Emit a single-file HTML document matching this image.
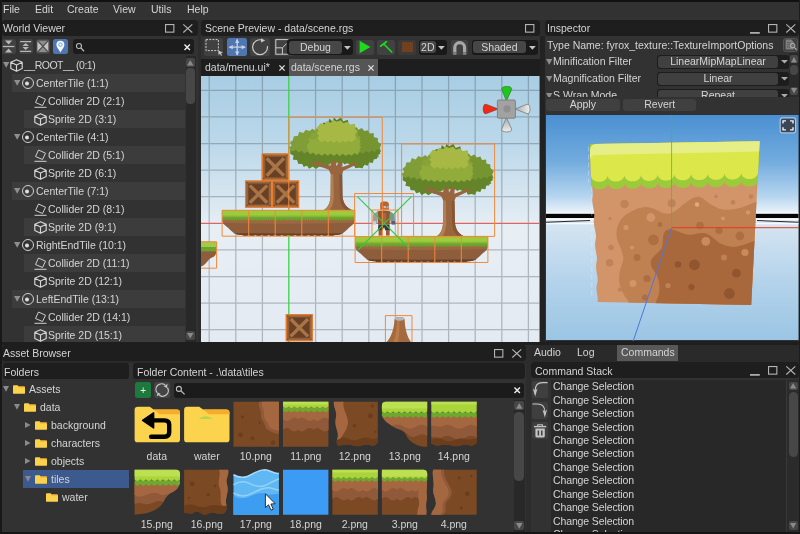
<!DOCTYPE html>
<html><head><meta charset="utf-8">
<style>
*{box-sizing:border-box;margin:0;padding:0}
html,body{width:800px;height:534px;overflow:hidden;background:#2c2c2c}
body{font-family:"Liberation Sans",sans-serif;font-size:10.5px;color:#d4d4d4;position:relative}
.a{position:absolute}
.t{position:absolute;white-space:nowrap;line-height:12px;height:12px;will-change:transform}
svg{overflow:visible}
</style></head><body>
<div class="a" style="left:2px;top:1px;width:798px;height:18.5px;background:#323232"></div>
<div class="t" style="left:3.00px;top:3px">File</div>
<div class="t" style="left:35.00px;top:3px">Edit</div>
<div class="t" style="left:67.00px;top:3px">Create</div>
<div class="t" style="left:113.00px;top:3px">View</div>
<div class="t" style="left:151.00px;top:3px">Utils</div>
<div class="t" style="left:187.00px;top:3px">Help</div>
<div class="a" style="left:2.2px;top:20px;width:195.4px;height:322.3px;background:#323232"></div>
<div class="a" style="left:2.2px;top:20px;width:195.4px;height:16.3px;background:#1e1e1e;border-radius:3px"></div>
<div class="t" style="left:3.20px;top:22px">World Viewer</div>
<svg class="a" style="left:182.6px;top:24.1px" width="9.6" height="8.8" viewBox="0 0 9.6 8.8"><path d="M0.3 0.3L9.3 8.5M9.3 0.3L0.3 8.5" stroke="#b4b4b4" stroke-width="1.1" fill="none"/></svg>
<svg class="a" style="left:164.7px;top:24.1px" width="9.4" height="8.7" viewBox="0 0 9.4 8.7"><rect x="0.55" y="0.55" width="8.3" height="7.6" stroke="#b4b4b4" stroke-width="1.1" fill="none"/></svg>
<div class="a" style="left:2.4px;top:39px;width:13.2px;height:14.8px;background:#424242;border-radius:2.5px"></div>
<svg class="a" style="left:2.4px;top:39px" width="13.2" height="14.8" viewBox="0 0 13.2 14.8"><path d="M3 1.5H10.2L6.6 5.6ZM3 13.5H10.2L6.6 9.4Z" fill="#b8b8b8"/><path d="M0.8 7.5H12.4" stroke="#b8b8b8" stroke-width="1.3"/></svg>
<div class="a" style="left:19.2px;top:39px;width:13.4px;height:14.8px;background:#424242;border-radius:2.5px"></div>
<svg class="a" style="left:19.2px;top:39px" width="13.4" height="14.8" viewBox="0 0 13.4 14.8"><path d="M1.2 2.6H12.2M1.2 12.4H12.2" stroke="#b8b8b8" stroke-width="1.3"/><path d="M6.7 3.9L10 7.1H3.4ZM6.7 11.1L10 7.9H3.4Z" fill="#b8b8b8"/></svg>
<div class="a" style="left:36px;top:39px;width:13.8px;height:14.8px;background:#424242;border-radius:2.5px"></div>
<svg class="a" style="left:36px;top:39px" width="13.8" height="14.8" viewBox="0 0 13.8 14.8"><rect x="1.5" y="1.6" width="10.8" height="11.6" fill="#8c8c8c"/><path d="M1.5 1.6L6.9 7.4L1.5 13.2ZM12.3 1.6L6.9 7.4L12.3 13.2Z" fill="#c2c2c2"/><path d="M1.5 1.6L12.3 13.2M12.3 1.6L1.5 13.2" stroke="#4a4a4a" stroke-width="1.2"/></svg>
<div class="a" style="left:53.4px;top:38.6px;width:14.8px;height:15.4px;background:#5076b2;border-radius:2.5px"></div>
<svg class="a" style="left:53.4px;top:38.6px" width="14.8" height="15.4" viewBox="0 0 14.8 15.4"><path d="M7.4 13.4C5 9.6 3.4 8 3.4 5.8A4 4 0 0 1 11.4 5.8C11.4 8 9.8 9.6 7.4 13.4Z" fill="#f4f6fa"/><circle cx="7.4" cy="5.6" r="1.7" fill="none" stroke="#5aa0d8" stroke-width="0.9"/></svg>
<div class="a" style="left:73.2px;top:39.4px;width:120.4px;height:14.4px;background:#1c1c1c;border-radius:3px"></div>
<svg class="a" style="left:75.8px;top:42.6px" width="9" height="9" viewBox="0 0 9 9"><circle cx="3" cy="3" r="2.5" fill="none" stroke="#bdbdbd" stroke-width="1.1"/><path d="M4.9 4.9L8 8.2" stroke="#bdbdbd" stroke-width="1.3"/></svg>
<svg class="a" style="left:184.4px;top:43.6px" width="6.4" height="6.4" viewBox="0 0 6.4 6.4"><path d="M0.5 0.5L5.9 5.9M5.9 0.5L0.5 5.9" stroke="#f0f0f0" stroke-width="1.4" fill="none"/></svg>
<svg class="a" style="left:2.55px;top:62.4px" width="6.4" height="6" viewBox="0 0 6.4 6"><path d="M0 0H6.4L3.2 5.8Z" fill="#8e8e8e"/></svg>
<svg class="a" style="left:10px;top:58.6px" width="13" height="13" viewBox="0 0 13 13"><path d="M6.5 0.7L12.2 3.3V9.6L6.5 12.3L0.8 9.6V3.3ZM0.8 3.3L6.5 6L12.2 3.3M6.5 6V12.3" stroke="#d6d6d6" stroke-width="1.15" fill="none" stroke-linejoin="round"/></svg>
<div class="t" style="left:24.30px;top:59px;letter-spacing:-0.5px">__ROOT__ (0:1)</div>
<div class="a" style="left:12px;top:74.3px;width:172.5px;height:17.6px;background:#3c3c3c"></div>
<svg class="a" style="left:14.3px;top:80.4px" width="6.4" height="6" viewBox="0 0 6.4 6"><path d="M0 0H6.4L3.2 5.8Z" fill="#8e8e8e"/></svg>
<svg class="a" style="left:22px;top:77.4px" width="12" height="12" viewBox="0 0 12 12"><circle cx="6" cy="6" r="5.5" stroke="#d0d0d0" fill="none"/><circle cx="5" cy="6.6" r="2" fill="#e0e0e0"/></svg>
<div class="t" style="left:36.20px;top:77px">CenterTile (1:1)</div>
<svg class="a" style="left:34px;top:94.6px" width="13" height="13" viewBox="0 0 13 13"><path d="M4.5 1L11.5 4.2L8.5 10.5L1.5 7.5ZM0.5 12.3H12.5" stroke="#d0d0d0" stroke-width="1" fill="none" stroke-linejoin="round"/></svg>
<div class="t" style="left:48.00px;top:95px">Collider 2D (2:1)</div>
<div class="a" style="left:24px;top:110.3px;width:160.5px;height:17.6px;background:#3c3c3c"></div>
<svg class="a" style="left:34px;top:112.6px" width="13" height="13" viewBox="0 0 13 13"><path d="M6.5 0.7L12.2 3.3V9.6L6.5 12.3L0.8 9.6V3.3ZM0.8 3.3L6.5 6L12.2 3.3M6.5 6V12.3" stroke="#d6d6d6" stroke-width="1.15" fill="none" stroke-linejoin="round"/></svg>
<div class="t" style="left:48.00px;top:113px">Sprite 2D (3:1)</div>
<svg class="a" style="left:14.3px;top:134.4px" width="6.4" height="6" viewBox="0 0 6.4 6"><path d="M0 0H6.4L3.2 5.8Z" fill="#8e8e8e"/></svg>
<svg class="a" style="left:22px;top:131.4px" width="12" height="12" viewBox="0 0 12 12"><circle cx="6" cy="6" r="5.5" stroke="#d0d0d0" fill="none"/><circle cx="5" cy="6.6" r="2" fill="#e0e0e0"/></svg>
<div class="t" style="left:36.20px;top:131px">CenterTile (4:1)</div>
<div class="a" style="left:24px;top:146.3px;width:160.5px;height:17.6px;background:#3c3c3c"></div>
<svg class="a" style="left:34px;top:148.6px" width="13" height="13" viewBox="0 0 13 13"><path d="M4.5 1L11.5 4.2L8.5 10.5L1.5 7.5ZM0.5 12.3H12.5" stroke="#d0d0d0" stroke-width="1" fill="none" stroke-linejoin="round"/></svg>
<div class="t" style="left:48.00px;top:149px">Collider 2D (5:1)</div>
<svg class="a" style="left:34px;top:166.6px" width="13" height="13" viewBox="0 0 13 13"><path d="M6.5 0.7L12.2 3.3V9.6L6.5 12.3L0.8 9.6V3.3ZM0.8 3.3L6.5 6L12.2 3.3M6.5 6V12.3" stroke="#d6d6d6" stroke-width="1.15" fill="none" stroke-linejoin="round"/></svg>
<div class="t" style="left:48.00px;top:167px">Sprite 2D (6:1)</div>
<div class="a" style="left:12px;top:182.3px;width:172.5px;height:17.6px;background:#3c3c3c"></div>
<svg class="a" style="left:14.3px;top:188.4px" width="6.4" height="6" viewBox="0 0 6.4 6"><path d="M0 0H6.4L3.2 5.8Z" fill="#8e8e8e"/></svg>
<svg class="a" style="left:22px;top:185.4px" width="12" height="12" viewBox="0 0 12 12"><circle cx="6" cy="6" r="5.5" stroke="#d0d0d0" fill="none"/><circle cx="5" cy="6.6" r="2" fill="#e0e0e0"/></svg>
<div class="t" style="left:36.20px;top:185px">CenterTile (7:1)</div>
<svg class="a" style="left:34px;top:202.6px" width="13" height="13" viewBox="0 0 13 13"><path d="M4.5 1L11.5 4.2L8.5 10.5L1.5 7.5ZM0.5 12.3H12.5" stroke="#d0d0d0" stroke-width="1" fill="none" stroke-linejoin="round"/></svg>
<div class="t" style="left:48.00px;top:203px">Collider 2D (8:1)</div>
<div class="a" style="left:24px;top:218.3px;width:160.5px;height:17.6px;background:#3c3c3c"></div>
<svg class="a" style="left:34px;top:220.6px" width="13" height="13" viewBox="0 0 13 13"><path d="M6.5 0.7L12.2 3.3V9.6L6.5 12.3L0.8 9.6V3.3ZM0.8 3.3L6.5 6L12.2 3.3M6.5 6V12.3" stroke="#d6d6d6" stroke-width="1.15" fill="none" stroke-linejoin="round"/></svg>
<div class="t" style="left:48.00px;top:221px">Sprite 2D (9:1)</div>
<svg class="a" style="left:14.3px;top:242.4px" width="6.4" height="6" viewBox="0 0 6.4 6"><path d="M0 0H6.4L3.2 5.8Z" fill="#8e8e8e"/></svg>
<svg class="a" style="left:22px;top:239.4px" width="12" height="12" viewBox="0 0 12 12"><circle cx="6" cy="6" r="5.5" stroke="#d0d0d0" fill="none"/><circle cx="5" cy="6.6" r="2" fill="#e0e0e0"/></svg>
<div class="t" style="left:36.20px;top:239px">RightEndTile (10:1)</div>
<div class="a" style="left:24px;top:254.3px;width:160.5px;height:17.6px;background:#3c3c3c"></div>
<svg class="a" style="left:34px;top:256.6px" width="13" height="13" viewBox="0 0 13 13"><path d="M4.5 1L11.5 4.2L8.5 10.5L1.5 7.5ZM0.5 12.3H12.5" stroke="#d0d0d0" stroke-width="1" fill="none" stroke-linejoin="round"/></svg>
<div class="t" style="left:48.00px;top:257px">Collider 2D (11:1)</div>
<svg class="a" style="left:34px;top:274.6px" width="13" height="13" viewBox="0 0 13 13"><path d="M6.5 0.7L12.2 3.3V9.6L6.5 12.3L0.8 9.6V3.3ZM0.8 3.3L6.5 6L12.2 3.3M6.5 6V12.3" stroke="#d6d6d6" stroke-width="1.15" fill="none" stroke-linejoin="round"/></svg>
<div class="t" style="left:48.00px;top:275px">Sprite 2D (12:1)</div>
<div class="a" style="left:12px;top:290.3px;width:172.5px;height:17.6px;background:#3c3c3c"></div>
<svg class="a" style="left:14.3px;top:296.4px" width="6.4" height="6" viewBox="0 0 6.4 6"><path d="M0 0H6.4L3.2 5.8Z" fill="#8e8e8e"/></svg>
<svg class="a" style="left:22px;top:293.4px" width="12" height="12" viewBox="0 0 12 12"><circle cx="6" cy="6" r="5.5" stroke="#d0d0d0" fill="none"/><circle cx="5" cy="6.6" r="2" fill="#e0e0e0"/></svg>
<div class="t" style="left:36.20px;top:293px">LeftEndTile (13:1)</div>
<svg class="a" style="left:34px;top:310.6px" width="13" height="13" viewBox="0 0 13 13"><path d="M4.5 1L11.5 4.2L8.5 10.5L1.5 7.5ZM0.5 12.3H12.5" stroke="#d0d0d0" stroke-width="1" fill="none" stroke-linejoin="round"/></svg>
<div class="t" style="left:48.00px;top:311px">Collider 2D (14:1)</div>
<div class="a" style="left:24px;top:326.3px;width:160.5px;height:17.6px;background:#3c3c3c"></div>
<svg class="a" style="left:34px;top:328.6px" width="13" height="13" viewBox="0 0 13 13"><path d="M6.5 0.7L12.2 3.3V9.6L6.5 12.3L0.8 9.6V3.3ZM0.8 3.3L6.5 6L12.2 3.3M6.5 6V12.3" stroke="#d6d6d6" stroke-width="1.15" fill="none" stroke-linejoin="round"/></svg>
<div class="t" style="left:48.00px;top:329px">Sprite 2D (15:1)</div>
<div class="a" style="left:0px;top:342.3px;width:800px;height:3px;background:#1e1e1e"></div>
<div class="a" style="left:185.8px;top:56px;width:10.2px;height:286.3px;background:#282828"></div>
<div class="a" style="left:186.3px;top:58px;width:8.7px;height:8.7px;background:#474747;border-radius:2px"></div>
<svg class="a" style="left:187.4px;top:59.5px" width="6.5" height="6" viewBox="0 0 6.5 6"><path d="M3.25 0L6.5 5.5H0Z" fill="#8a8a8a"/></svg>
<div class="a" style="left:186.3px;top:68px;width:8.7px;height:36px;background:#474747;border-radius:4px"></div>
<div class="a" style="left:186.3px;top:331px;width:8.7px;height:9px;background:#474747;border-radius:2px"></div>
<svg class="a" style="left:187.4px;top:333px" width="6.5" height="6" viewBox="0 0 6.5 6"><path d="M0 0H6.5L3.25 5.5Z" fill="#8a8a8a"/></svg>
<div class="a" style="left:200.8px;top:20px;width:338.8px;height:322.3px;background:#323232"></div>
<div class="a" style="left:200.8px;top:20px;width:338.8px;height:16.3px;background:#1e1e1e;border-radius:3px"></div>
<div class="t" style="left:205.30px;top:22px">Scene Preview - data/scene.rgs</div>
<svg class="a" style="left:525.4000000000001px;top:24.1px" width="9.4" height="8.7" viewBox="0 0 9.4 8.7"><rect x="0.55" y="0.55" width="8.3" height="7.6" stroke="#b4b4b4" stroke-width="1.1" fill="none"/></svg>
<svg class="a" style="left:201px;top:76px;overflow:hidden" width="338.5" height="266" viewBox="201 76 338.5 266"><defs><linearGradient id="sky" x1="0" y1="0" x2="0" y2="1"><stop offset="0" stop-color="#a8cde3"/><stop offset="0.25" stop-color="#bbd8ea"/><stop offset="0.5" stop-color="#dde9f2"/><stop offset="0.56" stop-color="#e7eef4"/><stop offset="1" stop-color="#e3eaf2"/></linearGradient><g id="gt"><rect x="0" y="8" width="26.7" height="17" fill="#9a6943"/><rect x="0" y="0" width="26.7" height="10" fill="#72a733"/><rect x="0" y="0" width="26.7" height="5" fill="#a3cd49"/></g></defs><rect x="201" y="76" width="338.5" height="266" fill="url(#sky)"/><path d="M209.2 76V342M235.8 76V342M262.4 76V342M315.6 76V342M342.2 76V342M368.8 76V342M395.4 76V342M422.0 76V342M448.6 76V342M475.2 76V342M501.8 76V342M528.4 76V342M201 90.3H539.5M201 116.9H539.5M201 143.5H539.5M201 170.1H539.5M201 196.7H539.5M201 249.9H539.5M201 276.5H539.5M201 303.1H539.5M201 329.7H539.5" stroke="#485058" stroke-opacity="0.34" stroke-width="1.25" fill="none"/><path d="M201 223.4H539.5" stroke="#e06464" stroke-width="1.4"/><path d="M288.8 76V342" stroke="#3fd14a" stroke-width="1.3"/><g transform="translate(288.8 117.3)"><path d="M-0.3 30.6 L2.8 28.3 L1.3 24.8 L4.1 22.9 L5.0 18.9 L9.0 18.6 L10.5 14.4 L14.4 15.7 L17.0 12.4 L20.7 13.8 L23.8 11.4 L26.9 13.9 L31.5 12.7 L29.9 16.6 L33.1 19.5 L31.5 23.4 L34.7 26.3 L33.1 29.9 L35.3 33.5 L32.7 36.7 L34.9 40.3 L32.3 43.5 L34.2 48.0 L30.5 49.1 L27.2 51.5 L24.0 49.1 L20.2 51.4 L18.4 48.2 L14.9 49.5 L13.4 46.5 L9.4 46.5 L8.5 42.7 L4.1 42.1 L5.3 38.5 L2.0 36.8 L3.1 33.3Z" fill="#809d38"/><path d="M61.6 11.1 L64.7 12.6 L67.2 9.5 L69.7 12.5 L73.1 10.8 L75.4 13.7 L79.1 12.9 L80.7 16.3 L84.8 15.8 L85.1 19.9 L89.0 20.8 L89.1 24.4 L92.4 27.3 L91.0 30.8 L92.3 34.2 L89.1 36.0 L90.0 40.0 L85.5 40.9 L83.9 45.6 L80.3 44.8 L79.0 48.2 L75.4 47.4 L73.5 51.0 L70.3 50.2 L66.6 50.9 L65.1 47.4 L60.5 47.1 L62.1 43.2 L58.9 40.4 L60.5 36.5 L57.3 33.7 L58.9 30.2 L57.2 26.7 L60.2 24.4 L58.5 20.9 L61.5 18.5 L59.9 15.1Z" fill="#76942f"/><path d="M34.7 5.2 L39.3 6.3 L40.5 1.3 L43.7 4.1 L45.3 0.1 L47.9 2.9 L52.0 0.1 L54.4 4.2 L59.0 2.5 L59.7 6.4 L61.8 11.2 L59.3 7.5 L56.3 10.8 L53.8 7.1 L50.8 10.4 L48.1 6.7 L45.7 10.4 L42.8 7.1 L40.4 10.8 L37.5 7.5 L33.0 8.0Z" fill="#5f7b26"/><path d="M17.7 27.7 L20.7 25.2 L18.9 21.7 L21.6 19.7 L22.2 15.9 L26.0 15.7 L26.2 12.6 L29.3 9.4 L31.7 6.1 L35.5 7.4 L38.1 4.0 L41.8 5.8 L44.6 2.8 L48.0 4.5 L51.9 2.9 L54.6 6.1 L58.4 4.5 L61.4 7.6 L66.3 6.8 L66.2 11.3 L69.6 13.5 L68.5 17.3 L72.0 19.9 L69.8 23.4 L72.3 26.6 L70.1 29.8 L71.8 33.6 L68.8 36.5 L70.3 40.7 L66.7 42.6 L65.9 47.5 L62.9 44.9 L59.6 47.0 L56.6 44.4 L53.2 46.5 L50.1 43.9 L47.2 46.8 L43.6 45.0 L40.7 47.9 L37.1 46.1 L34.9 48.7 L31.1 49.3 L27.3 49.1 L26.8 45.3 L22.7 44.7 L23.5 40.9 L20.0 39.3 L20.9 35.9 L18.2 33.5 L20.4 30.6Z" fill="#88a338"/><path d="M18.0 27.7 L20.6 25.2 L20.6 20.8 L23.5 22.9 L26.7 21.2 L29.6 23.4 L32.8 21.7 L35.7 23.8 L38.9 22.1 L41.8 24.3 L45.0 22.6 L48.1 24.7 L50.7 22.4 L53.7 24.0 L56.3 21.7 L59.4 23.2 L62.0 20.9 L65.0 22.5 L67.6 20.2 L69.9 21.0 L71.9 23.9 L70.1 27.0 L72.2 30.3 L69.5 33.3 L69.6 38.2 L66.4 36.5 L63.4 38.7 L60.2 37.0 L57.3 39.1 L54.1 37.4 L51.2 39.6 L48.0 37.9 L45.0 39.6 L42.3 37.5 L39.3 39.3 L36.5 37.2 L33.5 38.9 L30.7 36.8 L27.7 38.6 L24.9 36.5 L21.0 37.7 L20.7 33.9 L18.4 31.2Z" fill="#92ac3b"/><path d="M27.9 16.0 L29.9 13.5 L27.8 11.0 L29.2 9.2 L31.7 6.3 L35.5 7.2 L38.2 4.2 L41.8 5.6 L44.7 3.0 L48.0 4.4 L51.8 3.1 L54.6 6.0 L58.4 4.7 L61.4 7.5 L66.1 6.9 L66.2 11.0 L68.3 14.5 L66.2 17.8 L67.5 21.1 L65.5 22.7 L62.7 25.0 L59.6 23.1 L56.8 25.3 L53.8 23.5 L51.0 25.7 L48.0 23.8 L44.9 25.7 L42.0 23.5 L38.9 25.3 L36.0 23.1 L32.9 25.0 L30.8 23.4 L28.4 21.1 L30.2 18.4Z" fill="#a7b944"/><path d="M1.4 31.6 L4.0 34.3 L7.2 32.5 L9.7 35.2 L12.9 33.4 L15.5 36.1 L18.7 34.3 L21.2 37.0 L24.5 35.2 L27.0 37.9 L30.0 36.1 L33.0 38.4 L36.0 36.2 L39.0 38.5 L42.0 36.3 L45.0 38.6 L48.0 36.4 L51.0 38.7 L54.0 36.5 L57.0 38.8 L59.8 36.6 L63.0 38.4 L65.5 35.7 L68.7 37.5 L71.2 34.8 L74.4 36.6 L77.0 33.9 L80.2 35.6 L82.7 33.0 L85.9 34.7 L88.4 32.1 L90.7 32.7 L91.5 36.5 L88.4 38.3 L88.0 41.7 L84.6 41.9 L83.9 45.5 L80.3 44.9 L78.9 48.1 L75.4 47.4 L73.5 50.9 L70.3 50.3 L66.6 50.8 L65.0 47.5 L61.8 48.2 L59.2 45.5 L55.9 47.2 L53.3 44.5 L50.4 46.2 L47.1 44.5 L44.5 47.2 L41.2 45.5 L38.9 48.1 L35.5 47.1 L33.7 50.2 L30.5 49.2 L27.2 51.4 L24.0 49.2 L20.2 51.3 L18.3 48.3 L15.0 49.5 L13.3 46.5 L9.5 46.4 L8.5 42.7 L4.3 42.1 L4.8 38.3 L1.4 36.5Z" fill="#64842a"/><path d="M33.5 93.4 C39 91.5 41.5 86 41.8 78 L42 57 L40 52.5 L23 46 L24 43.5 L41.5 48.5 L44 43 L47 43 L47.5 49 L51 43 L53.5 44 L53 50 L68.5 44.5 L69.5 46.5 L54.5 53.5 L53.2 57 L53.6 78 C54 86 58 91.5 65 93.4 Z" fill="#99653f"/><path d="M44.5 57 L45 78 C45 86 43 91 40 93.4 L33.5 93.4 C39 91.5 41.5 86 41.8 78 L42 57Z" fill="#b37e51"/><path d="M50.5 57 L50.8 78 C51 86 54 91 58 93.4 L65 93.4 C58 91.5 54 86 53.6 78 L53.2 57Z" fill="#875636"/></g><g transform="translate(401.3 143.7)"><path d="M-0.3 30.6 L2.8 28.3 L1.3 24.8 L4.1 22.9 L5.0 18.9 L9.0 18.6 L10.5 14.4 L14.4 15.7 L17.0 12.4 L20.7 13.8 L23.8 11.4 L26.9 13.9 L31.5 12.7 L29.9 16.6 L33.1 19.5 L31.5 23.4 L34.7 26.3 L33.1 29.9 L35.3 33.5 L32.7 36.7 L34.9 40.3 L32.3 43.5 L34.2 48.0 L30.5 49.1 L27.2 51.5 L24.0 49.1 L20.2 51.4 L18.4 48.2 L14.9 49.5 L13.4 46.5 L9.4 46.5 L8.5 42.7 L4.1 42.1 L5.3 38.5 L2.0 36.8 L3.1 33.3Z" fill="#809d38"/><path d="M61.6 11.1 L64.7 12.6 L67.2 9.5 L69.7 12.5 L73.1 10.8 L75.4 13.7 L79.1 12.9 L80.7 16.3 L84.8 15.8 L85.1 19.9 L89.0 20.8 L89.1 24.4 L92.4 27.3 L91.0 30.8 L92.3 34.2 L89.1 36.0 L90.0 40.0 L85.5 40.9 L83.9 45.6 L80.3 44.8 L79.0 48.2 L75.4 47.4 L73.5 51.0 L70.3 50.2 L66.6 50.9 L65.1 47.4 L60.5 47.1 L62.1 43.2 L58.9 40.4 L60.5 36.5 L57.3 33.7 L58.9 30.2 L57.2 26.7 L60.2 24.4 L58.5 20.9 L61.5 18.5 L59.9 15.1Z" fill="#76942f"/><path d="M34.7 5.2 L39.3 6.3 L40.5 1.3 L43.7 4.1 L45.3 0.1 L47.9 2.9 L52.0 0.1 L54.4 4.2 L59.0 2.5 L59.7 6.4 L61.8 11.2 L59.3 7.5 L56.3 10.8 L53.8 7.1 L50.8 10.4 L48.1 6.7 L45.7 10.4 L42.8 7.1 L40.4 10.8 L37.5 7.5 L33.0 8.0Z" fill="#5f7b26"/><path d="M17.7 27.7 L20.7 25.2 L18.9 21.7 L21.6 19.7 L22.2 15.9 L26.0 15.7 L26.2 12.6 L29.3 9.4 L31.7 6.1 L35.5 7.4 L38.1 4.0 L41.8 5.8 L44.6 2.8 L48.0 4.5 L51.9 2.9 L54.6 6.1 L58.4 4.5 L61.4 7.6 L66.3 6.8 L66.2 11.3 L69.6 13.5 L68.5 17.3 L72.0 19.9 L69.8 23.4 L72.3 26.6 L70.1 29.8 L71.8 33.6 L68.8 36.5 L70.3 40.7 L66.7 42.6 L65.9 47.5 L62.9 44.9 L59.6 47.0 L56.6 44.4 L53.2 46.5 L50.1 43.9 L47.2 46.8 L43.6 45.0 L40.7 47.9 L37.1 46.1 L34.9 48.7 L31.1 49.3 L27.3 49.1 L26.8 45.3 L22.7 44.7 L23.5 40.9 L20.0 39.3 L20.9 35.9 L18.2 33.5 L20.4 30.6Z" fill="#88a338"/><path d="M18.0 27.7 L20.6 25.2 L20.6 20.8 L23.5 22.9 L26.7 21.2 L29.6 23.4 L32.8 21.7 L35.7 23.8 L38.9 22.1 L41.8 24.3 L45.0 22.6 L48.1 24.7 L50.7 22.4 L53.7 24.0 L56.3 21.7 L59.4 23.2 L62.0 20.9 L65.0 22.5 L67.6 20.2 L69.9 21.0 L71.9 23.9 L70.1 27.0 L72.2 30.3 L69.5 33.3 L69.6 38.2 L66.4 36.5 L63.4 38.7 L60.2 37.0 L57.3 39.1 L54.1 37.4 L51.2 39.6 L48.0 37.9 L45.0 39.6 L42.3 37.5 L39.3 39.3 L36.5 37.2 L33.5 38.9 L30.7 36.8 L27.7 38.6 L24.9 36.5 L21.0 37.7 L20.7 33.9 L18.4 31.2Z" fill="#92ac3b"/><path d="M27.9 16.0 L29.9 13.5 L27.8 11.0 L29.2 9.2 L31.7 6.3 L35.5 7.2 L38.2 4.2 L41.8 5.6 L44.7 3.0 L48.0 4.4 L51.8 3.1 L54.6 6.0 L58.4 4.7 L61.4 7.5 L66.1 6.9 L66.2 11.0 L68.3 14.5 L66.2 17.8 L67.5 21.1 L65.5 22.7 L62.7 25.0 L59.6 23.1 L56.8 25.3 L53.8 23.5 L51.0 25.7 L48.0 23.8 L44.9 25.7 L42.0 23.5 L38.9 25.3 L36.0 23.1 L32.9 25.0 L30.8 23.4 L28.4 21.1 L30.2 18.4Z" fill="#a7b944"/><path d="M1.4 31.6 L4.0 34.3 L7.2 32.5 L9.7 35.2 L12.9 33.4 L15.5 36.1 L18.7 34.3 L21.2 37.0 L24.5 35.2 L27.0 37.9 L30.0 36.1 L33.0 38.4 L36.0 36.2 L39.0 38.5 L42.0 36.3 L45.0 38.6 L48.0 36.4 L51.0 38.7 L54.0 36.5 L57.0 38.8 L59.8 36.6 L63.0 38.4 L65.5 35.7 L68.7 37.5 L71.2 34.8 L74.4 36.6 L77.0 33.9 L80.2 35.6 L82.7 33.0 L85.9 34.7 L88.4 32.1 L90.7 32.7 L91.5 36.5 L88.4 38.3 L88.0 41.7 L84.6 41.9 L83.9 45.5 L80.3 44.9 L78.9 48.1 L75.4 47.4 L73.5 50.9 L70.3 50.3 L66.6 50.8 L65.0 47.5 L61.8 48.2 L59.2 45.5 L55.9 47.2 L53.3 44.5 L50.4 46.2 L47.1 44.5 L44.5 47.2 L41.2 45.5 L38.9 48.1 L35.5 47.1 L33.7 50.2 L30.5 49.2 L27.2 51.4 L24.0 49.2 L20.2 51.3 L18.3 48.3 L15.0 49.5 L13.3 46.5 L9.5 46.4 L8.5 42.7 L4.3 42.1 L4.8 38.3 L1.4 36.5Z" fill="#64842a"/><path d="M33.5 93.4 C39 91.5 41.5 86 41.8 78 L42 57 L40 52.5 L23 46 L24 43.5 L41.5 48.5 L44 43 L47 43 L47.5 49 L51 43 L53.5 44 L53 50 L68.5 44.5 L69.5 46.5 L54.5 53.5 L53.2 57 L53.6 78 C54 86 58 91.5 65 93.4 Z" fill="#99653f"/><path d="M44.5 57 L45 78 C45 86 43 91 40 93.4 L33.5 93.4 C39 91.5 41.5 86 41.8 78 L42 57Z" fill="#b37e51"/><path d="M50.5 57 L50.8 78 C51 86 54 91 58 93.4 L65 93.4 C58 91.5 54 86 53.6 78 L53.2 57Z" fill="#875636"/></g><g transform="translate(261.8 153.5)"><rect x="0" y="0" width="27" height="27" fill="#9a663b"/><rect x="3.3" y="3.3" width="20.4" height="20.4" fill="#684025"/><path d="M3.6 6L6 3.6L23.4 21L21 23.4ZM21 3.6L23.4 6L6 23.4L3.6 21Z" fill="#a97547"/><rect x="3.3" y="3.3" width="20.4" height="20.4" fill="none" stroke="#7a4c2b" stroke-width="0.8"/><circle cx="2" cy="2" r="0.6" fill="#5a3a20"/><circle cx="25" cy="2" r="0.6" fill="#5a3a20"/><circle cx="2" cy="25" r="0.6" fill="#5a3a20"/><circle cx="25" cy="25" r="0.6" fill="#5a3a20"/><rect x="0.5" y="0.5" width="26" height="26" fill="none" stroke="#ef7d2c" stroke-width="1.1"/></g><g transform="translate(245 180.6)"><rect x="0" y="0" width="27" height="27" fill="#9a663b"/><rect x="3.3" y="3.3" width="20.4" height="20.4" fill="#684025"/><path d="M3.6 6L6 3.6L23.4 21L21 23.4ZM21 3.6L23.4 6L6 23.4L3.6 21Z" fill="#a97547"/><rect x="3.3" y="3.3" width="20.4" height="20.4" fill="none" stroke="#7a4c2b" stroke-width="0.8"/><circle cx="2" cy="2" r="0.6" fill="#5a3a20"/><circle cx="25" cy="2" r="0.6" fill="#5a3a20"/><circle cx="2" cy="25" r="0.6" fill="#5a3a20"/><circle cx="25" cy="25" r="0.6" fill="#5a3a20"/><rect x="0.5" y="0.5" width="26" height="26" fill="none" stroke="#ef7d2c" stroke-width="1.1"/></g><g transform="translate(272.1 180.6)"><rect x="0" y="0" width="27" height="27" fill="#9a663b"/><rect x="3.3" y="3.3" width="20.4" height="20.4" fill="#684025"/><path d="M3.6 6L6 3.6L23.4 21L21 23.4ZM21 3.6L23.4 6L6 23.4L3.6 21Z" fill="#a97547"/><rect x="3.3" y="3.3" width="20.4" height="20.4" fill="none" stroke="#7a4c2b" stroke-width="0.8"/><circle cx="2" cy="2" r="0.6" fill="#5a3a20"/><circle cx="25" cy="2" r="0.6" fill="#5a3a20"/><circle cx="2" cy="25" r="0.6" fill="#5a3a20"/><circle cx="25" cy="25" r="0.6" fill="#5a3a20"/><rect x="0.5" y="0.5" width="26" height="26" fill="none" stroke="#ef7d2c" stroke-width="1.1"/></g><g transform="translate(285.8 314.2)"><rect x="0" y="0" width="27" height="27" fill="#9a663b"/><rect x="3.3" y="3.3" width="20.4" height="20.4" fill="#684025"/><path d="M3.6 6L6 3.6L23.4 21L21 23.4ZM21 3.6L23.4 6L6 23.4L3.6 21Z" fill="#a97547"/><rect x="3.3" y="3.3" width="20.4" height="20.4" fill="none" stroke="#7a4c2b" stroke-width="0.8"/><circle cx="2" cy="2" r="0.6" fill="#5a3a20"/><circle cx="25" cy="2" r="0.6" fill="#5a3a20"/><circle cx="2" cy="25" r="0.6" fill="#5a3a20"/><circle cx="25" cy="25" r="0.6" fill="#5a3a20"/><rect x="0.5" y="0.5" width="26" height="26" fill="none" stroke="#ef7d2c" stroke-width="1.1"/></g><path d="M222.1 218.3 H354.9 C355.4 223.3 351.9 225.3 348.9 227.8 C344.9 232.3 340.9 235.5 334.9 234.9 Q331.5 237.1 328.2 234.9 Q324.9 237.1 321.6 234.9 Q318.3 237.1 315.0 234.9 Q311.7 237.1 308.4 234.9 Q305.0 237.1 301.7 234.9 Q298.4 237.1 295.1 234.9 Q291.8 237.1 288.5 234.9 Q285.2 237.1 281.9 234.9 Q278.5 237.1 275.2 234.9 Q271.9 237.1 268.6 234.9 Q265.3 237.1 262.0 234.9 Q258.7 237.1 255.4 234.9 Q252.0 237.1 248.7 234.9 Q245.4 237.1 242.1 234.9 C236.1 235.5 232.1 232.3 228.1 227.8 C225.1 225.3 221.6 223.3 222.1 218.3Z" fill="#8e5d3b"/><clipPath id="cp222"><path d="M222.1 218.3 H354.9 C355.4 223.3 351.9 225.3 348.9 227.8 C344.9 232.3 340.9 235.5 334.9 234.9 Q331.5 237.1 328.2 234.9 Q324.9 237.1 321.6 234.9 Q318.3 237.1 315.0 234.9 Q311.7 237.1 308.4 234.9 Q305.0 237.1 301.7 234.9 Q298.4 237.1 295.1 234.9 Q291.8 237.1 288.5 234.9 Q285.2 237.1 281.9 234.9 Q278.5 237.1 275.2 234.9 Q271.9 237.1 268.6 234.9 Q265.3 237.1 262.0 234.9 Q258.7 237.1 255.4 234.9 Q252.0 237.1 248.7 234.9 Q245.4 237.1 242.1 234.9 C236.1 235.5 232.1 232.3 228.1 227.8 C225.1 225.3 221.6 223.3 222.1 218.3Z"/></clipPath><path d="M222.1 232.9 Q288.5 233.9 354.9 232.9 V238.5 H222.1Z" fill="#6c4227" clip-path="url(#cp222)"/><path d="M222.1 218.3 H354.9 V222.8 Q288.5 224.8 222.1 222.8Z" fill="#a06a44" clip-path="url(#cp222)" opacity="0.8"/><path d="M222.1 210.3 H354.9 V219.1 L353.7 220.9 L352.6 219.1 L351.5 220.9 L350.4 219.1 L349.3 220.9 L348.2 219.1 L347.1 220.9 L346.0 219.1 L344.9 220.9 L343.8 219.1 L342.7 220.9 L341.6 219.1 L340.5 220.9 L339.4 219.1 L338.3 220.9 L337.2 219.1 L336.0 220.9 L334.9 219.1 L333.8 220.9 L332.7 219.1 L331.6 220.9 L330.5 219.1 L329.4 220.9 L328.3 219.1 L327.2 220.9 L326.1 219.1 L325.0 220.9 L323.9 219.1 L322.8 220.9 L321.7 219.1 L320.6 220.9 L319.5 219.1 L318.3 220.9 L317.2 219.1 L316.1 220.9 L315.0 219.1 L313.9 220.9 L312.8 219.1 L311.7 220.9 L310.6 219.1 L309.5 220.9 L308.4 219.1 L307.3 220.9 L306.2 219.1 L305.1 220.9 L304.0 219.1 L302.9 220.9 L301.8 219.1 L300.6 220.9 L299.5 219.1 L298.4 220.9 L297.3 219.1 L296.2 220.9 L295.1 219.1 L294.0 220.9 L292.9 219.1 L291.8 220.9 L290.7 219.1 L289.6 220.9 L288.5 219.1 L287.4 220.9 L286.3 219.1 L285.2 220.9 L284.1 219.1 L282.9 220.9 L281.8 219.1 L280.7 220.9 L279.6 219.1 L278.5 220.9 L277.4 219.1 L276.3 220.9 L275.2 219.1 L274.1 220.9 L273.0 219.1 L271.9 220.9 L270.8 219.1 L269.7 220.9 L268.6 219.1 L267.5 220.9 L266.4 219.1 L265.2 220.9 L264.1 219.1 L263.0 220.9 L261.9 219.1 L260.8 220.9 L259.7 219.1 L258.6 220.9 L257.5 219.1 L256.4 220.9 L255.3 219.1 L254.2 220.9 L253.1 219.1 L252.0 220.9 L250.9 219.1 L249.8 220.9 L248.7 219.1 L247.5 220.9 L246.4 219.1 L245.3 220.9 L244.2 219.1 L243.1 220.9 L242.0 219.1 L240.9 220.9 L239.8 219.1 L238.7 220.9 L237.6 219.1 L236.5 220.9 L235.4 219.1 L234.3 220.9 L233.2 219.1 L232.1 220.9 L231.0 219.1 L229.8 220.9 L228.7 219.1 L227.6 220.9 L226.5 219.1 L225.4 220.9 L224.3 219.1 L223.2 220.9 L222.1 219.1 Z" fill="#6ba42f"/><rect x="222.1" y="210.3" width="132.8" height="5.8" fill="#9dcb3c"/><rect x="222.1" y="215.5" width="132.8" height="1.6" fill="#85b935"/><path d="M222.1 210.3V236.20000000000002M248.7 210.3V236.20000000000002M275.2 210.3V236.20000000000002M301.8 210.3V236.20000000000002M328.3 210.3V236.20000000000002M354.9 210.3V236.20000000000002M222.1 210.3H354.9M222.1 236.20000000000002H354.9" stroke="#f08a3c" stroke-width="1" fill="none"/><path d="M355.1 244.6 H487.9 C488.4 249.6 484.9 251.6 481.9 254.1 C477.9 258.6 473.9 261.8 467.9 261.2 Q464.5 263.4 461.2 261.2 Q457.9 263.4 454.6 261.2 Q451.3 263.4 448.0 261.2 Q444.7 263.4 441.4 261.2 Q438.0 263.4 434.7 261.2 Q431.4 263.4 428.1 261.2 Q424.8 263.4 421.5 261.2 Q418.2 263.4 414.9 261.2 Q411.5 263.4 408.2 261.2 Q404.9 263.4 401.6 261.2 Q398.3 263.4 395.0 261.2 Q391.7 263.4 388.4 261.2 Q385.0 263.4 381.7 261.2 Q378.4 263.4 375.1 261.2 C369.1 261.8 365.1 258.6 361.1 254.1 C358.1 251.6 354.6 249.6 355.1 244.6Z" fill="#8e5d3b"/><clipPath id="cp355"><path d="M355.1 244.6 H487.9 C488.4 249.6 484.9 251.6 481.9 254.1 C477.9 258.6 473.9 261.8 467.9 261.2 Q464.5 263.4 461.2 261.2 Q457.9 263.4 454.6 261.2 Q451.3 263.4 448.0 261.2 Q444.7 263.4 441.4 261.2 Q438.0 263.4 434.7 261.2 Q431.4 263.4 428.1 261.2 Q424.8 263.4 421.5 261.2 Q418.2 263.4 414.9 261.2 Q411.5 263.4 408.2 261.2 Q404.9 263.4 401.6 261.2 Q398.3 263.4 395.0 261.2 Q391.7 263.4 388.4 261.2 Q385.0 263.4 381.7 261.2 Q378.4 263.4 375.1 261.2 C369.1 261.8 365.1 258.6 361.1 254.1 C358.1 251.6 354.6 249.6 355.1 244.6Z"/></clipPath><path d="M355.1 259.2 Q421.5 260.2 487.9 259.2 V264.8 H355.1Z" fill="#6c4227" clip-path="url(#cp355)"/><path d="M355.1 244.6 H487.9 V249.1 Q421.5 251.1 355.1 249.1Z" fill="#a06a44" clip-path="url(#cp355)" opacity="0.8"/><path d="M355.1 236.6 H487.9 V245.4 L486.7 247.2 L485.6 245.4 L484.5 247.2 L483.4 245.4 L482.3 247.2 L481.2 245.4 L480.1 247.2 L479.0 245.4 L477.9 247.2 L476.8 245.4 L475.7 247.2 L474.6 245.4 L473.5 247.2 L472.4 245.4 L471.3 247.2 L470.2 245.4 L469.0 247.2 L467.9 245.4 L466.8 247.2 L465.7 245.4 L464.6 247.2 L463.5 245.4 L462.4 247.2 L461.3 245.4 L460.2 247.2 L459.1 245.4 L458.0 247.2 L456.9 245.4 L455.8 247.2 L454.7 245.4 L453.6 247.2 L452.5 245.4 L451.3 247.2 L450.2 245.4 L449.1 247.2 L448.0 245.4 L446.9 247.2 L445.8 245.4 L444.7 247.2 L443.6 245.4 L442.5 247.2 L441.4 245.4 L440.3 247.2 L439.2 245.4 L438.1 247.2 L437.0 245.4 L435.9 247.2 L434.8 245.4 L433.6 247.2 L432.5 245.4 L431.4 247.2 L430.3 245.4 L429.2 247.2 L428.1 245.4 L427.0 247.2 L425.9 245.4 L424.8 247.2 L423.7 245.4 L422.6 247.2 L421.5 245.4 L420.4 247.2 L419.3 245.4 L418.2 247.2 L417.1 245.4 L415.9 247.2 L414.8 245.4 L413.7 247.2 L412.6 245.4 L411.5 247.2 L410.4 245.4 L409.3 247.2 L408.2 245.4 L407.1 247.2 L406.0 245.4 L404.9 247.2 L403.8 245.4 L402.7 247.2 L401.6 245.4 L400.5 247.2 L399.4 245.4 L398.2 247.2 L397.1 245.4 L396.0 247.2 L394.9 245.4 L393.8 247.2 L392.7 245.4 L391.6 247.2 L390.5 245.4 L389.4 247.2 L388.3 245.4 L387.2 247.2 L386.1 245.4 L385.0 247.2 L383.9 245.4 L382.8 247.2 L381.7 245.4 L380.5 247.2 L379.4 245.4 L378.3 247.2 L377.2 245.4 L376.1 247.2 L375.0 245.4 L373.9 247.2 L372.8 245.4 L371.7 247.2 L370.6 245.4 L369.5 247.2 L368.4 245.4 L367.3 247.2 L366.2 245.4 L365.1 247.2 L364.0 245.4 L362.8 247.2 L361.7 245.4 L360.6 247.2 L359.5 245.4 L358.4 247.2 L357.3 245.4 L356.2 247.2 L355.1 245.4 Z" fill="#6ba42f"/><rect x="355.1" y="236.6" width="132.8" height="5.8" fill="#9dcb3c"/><rect x="355.1" y="241.79999999999998" width="132.8" height="1.6" fill="#85b935"/><path d="M355.1 236.6V262.5M381.7 236.6V262.5M408.2 236.6V262.5M434.8 236.6V262.5M461.3 236.6V262.5M487.9 236.6V262.5M355.1 236.6H487.9M355.1 262.5H487.9" stroke="#f08a3c" stroke-width="1" fill="none"/><path d="M201 250H216.2C216.6 254 215 256.5 212 257.5C209 258.5 208 261 206 263C204.5 264.8 203 266 201 266.5Z" fill="#8e5d3b"/><rect x="201" y="241.8" width="15.6" height="9.6" fill="#6da431"/><rect x="201" y="241.8" width="15.6" height="5.2" fill="#a2cc48"/><path d="M201 241.8H216.6V268.2H201" stroke="#f08a3c" fill="none"/><path d="M386.3 342.5C391.5 337 394 329 394.6 319C396 316.4 403 316.4 404.6 319C405 329 407 337 411.4 342.5Z" fill="#a4693c"/><path d="M397 320C397 330 395.5 337 393 342.5H398C399.5 336 399.5 328 399.5 320Z" fill="#b87b4a"/><ellipse cx="399.6" cy="318.8" rx="4.6" ry="1.9" fill="#b4b8be"/><path d="M385.4 342V315.6H412V342" stroke="#f08a3c" fill="none"/><path d="M380.2 209.8V204.5Q380.2 201.6 383 201.6H386Q388.9 201.8 388.9 204.8V209.8Z" fill="#b5652f"/><rect x="383.5" y="206" width="5" height="2.2" fill="#d9b89c"/><rect x="386.2" y="206.2" width="1.2" height="1.4" fill="#3a6ea8"/><path d="M377.2 211.5Q384 209.5 390.4 211.5L389.6 224.6H378Z" fill="#8f5630"/><rect x="381.6" y="213" width="4.6" height="10" fill="#a66a3e"/><path d="M373 214.5L377.4 211.4L378.2 216L376.6 224H372.6Z" fill="#9b9fa3"/><path d="M394.6 214.5L390.2 211.4L389.4 216L391 224H395Z" fill="#8b8f93"/><rect x="372.4" y="221" width="3.6" height="3.6" fill="#c9ccd0"/><rect x="391.6" y="221" width="3.6" height="3.6" fill="#5b5f66"/><path d="M378.4 224.4H389.4L390 230.4H385.4L384 227L382.6 230.4H377.8Z" fill="#3b3340"/><rect x="378.6" y="230" width="3.6" height="5.6" fill="#9a5a30"/><rect x="386" y="230" width="3.6" height="5.6" fill="#9a5a30"/><rect x="288.8" y="117.3" width="93.6" height="119" fill="none" stroke="#f08a3c" stroke-width="1" style="display:none"/><path d="M288.8 210.2V117.3H382.3V236.4" stroke="#f08a3c" fill="none"/><path d="M401.6 236.4V143.9H494.6V236.4H401.6" stroke="#f08a3c" fill="none"/><path d="M354.6 236.4V193.5H413.6V236.4" stroke="#f08a3c" fill="none"/><rect x="372" y="210" width="26" height="26.4" stroke="#f08a3c" fill="none"/><path d="M357.4 196.6L410 249M411.4 196.6L358 250" stroke="#3fc440" stroke-width="1.1" fill="none"/><defs><linearGradient id="gg" x1="0" y1="0" x2="1" y2="0"><stop offset="0" stop-color="#a8a8a8"/><stop offset="1" stop-color="#efefef"/></linearGradient><linearGradient id="gv" x1="0" y1="0" x2="0" y2="1"><stop offset="0" stop-color="#a8a8a8"/><stop offset="1" stop-color="#eeeeee"/></linearGradient></defs><path d="M506.4 101L501.9 89.6Q501 86.6 506.7 86.4Q512.4 86.6 511.5 89.6Z" fill="#1fc718" stroke="#2a7a26" stroke-width="0.7"/><path d="M498 109L486.4 104.4Q483.3 103.6 483.2 109Q483.3 114.4 486.4 113.6Z" fill="#f02a14" stroke="#8a3226" stroke-width="0.7"/><path d="M515 109L526.8 104.4Q529.9 103.6 530 109Q529.9 114.4 526.8 113.6Z" fill="url(#gg)" stroke="#6e6e6e" stroke-width="0.7"/><path d="M506.4 117.4L501.9 128.8Q501 131.8 506.7 132Q512.4 131.8 511.5 128.8Z" fill="url(#gv)" stroke="#6e6e6e" stroke-width="0.7"/><rect x="497.4" y="100" width="18" height="18.2" rx="1.2" fill="#a2a2a2" stroke="#7c7c7c" stroke-width="0.9"/><circle cx="507" cy="108.8" r="3.6" fill="#8f8f8f"/></svg>
<div class="a" style="left:203.6px;top:38.4px;width:19.8px;height:18px;background:#414141;border-radius:2.5px"></div>
<svg class="a" style="left:203.6px;top:38.4px" width="20" height="18" viewBox="0 0 20 18"><rect x="2" y="1.6" width="12.4" height="11" fill="none" stroke="#c9c9c9" stroke-width="1" stroke-dasharray="2 1.2"/><path d="M14.2 12.4L19 14.6L16.9 15.2L18 17.4L17 17.8L16 15.7L14.6 17Z" fill="#c9c9c9"/></svg>
<div class="a" style="left:227px;top:38.4px;width:19.8px;height:18px;background:#5076b2;border-radius:2.5px"></div>
<svg class="a" style="left:227px;top:38.4px" width="20" height="18" viewBox="0 0 20 18"><path d="M10.2 1.5V16.9M2.4 9.2H18" stroke="#c6d2e6" stroke-width="1.3" fill="none"/><path d="M10.2 0.8L12.3 5H8.1ZM10.2 17.6L12.3 13.4H8.1ZM1.6 9.2L5.8 7.1V11.3ZM18.8 9.2L14.6 7.1V11.3Z" fill="#c6d2e6"/></svg>
<div class="a" style="left:250.4px;top:38.4px;width:19.8px;height:18px;background:#414141;border-radius:2.5px"></div>
<svg class="a" style="left:250.4px;top:38.4px" width="20" height="18" viewBox="0 0 20 18"><path d="M12.5 2.2A7.4 7.4 0 1 0 17.4 8.2" stroke="#c9c9c9" stroke-width="1.2" fill="none"/><path d="M11 0.2L15.2 2.4L11 4.6Z" fill="#c9c9c9"/></svg>
<div class="a" style="left:273.8px;top:38.4px;width:19.8px;height:18px;background:#414141;border-radius:2.5px"></div>
<svg class="a" style="left:273.8px;top:38.4px" width="20" height="18" viewBox="0 0 20 18"><rect x="1.8" y="1.6" width="15" height="14.6" fill="none" stroke="#c9c9c9" stroke-width="1"/><path d="M1.8 9.8H8.4V16.2M8.4 9.8L12.6 5.6" fill="none" stroke="#c9c9c9" stroke-width="1"/></svg>
<div class="a" style="left:287px;top:39.4px;width:66.2px;height:16px;background:#191919;border-radius:3px"></div>
<div class="a" style="left:288.5px;top:41.1px;width:53px;height:12.6px;background:#474747;border-radius:3px"></div>
<div class="t" style="left:288.50px;top:41px;width:53px;text-align:center">Debug</div>
<svg class="a" style="left:343.95000000000005px;top:46.0px" width="6.8" height="3.8" viewBox="0 0 6.8 3.8"><path d="M0 0H6.8L3.4 3.8Z" fill="#c4c4c4"/></svg>
<div class="a" style="left:356.2px;top:40.2px;width:17.4px;height:14.4px;background:#414141;border-radius:2.5px"></div>
<svg class="a" style="left:356.2px;top:40.2px" width="18" height="15" viewBox="0 0 18 15"><path d="M3.6 0.8V13.2L14.4 7Z" fill="#1edb1e"/></svg>
<div class="a" style="left:377px;top:40.2px;width:18px;height:14.4px;background:#414141;border-radius:2.5px"></div>
<svg class="a" style="left:377px;top:40.2px" width="18" height="15" viewBox="0 0 18 15"><path d="M3.6 6.2L9.4 1.8M6.8 4L14.8 12" stroke="#1edb1e" stroke-width="1.7" fill="none" stroke-linecap="round"/></svg>
<div class="a" style="left:398.2px;top:40.2px;width:17.4px;height:14.4px;background:#3a3a3a;border-radius:2.5px"></div>
<div class="a" style="left:401.8px;top:42.2px;width:10.8px;height:10px;background:#70401f"></div>
<div class="a" style="left:418.9px;top:39.6px;width:28.4px;height:15.6px;background:#191919;border-radius:3px"></div>
<div class="a" style="left:420.4px;top:41.300000000000004px;width:15.6px;height:12.2px;background:#474747;border-radius:3px"></div>
<div class="t" style="left:420.40px;top:41px;width:15.6px;text-align:center">2D</div>
<svg class="a" style="left:438.25px;top:46.0px" width="6.8" height="3.8" viewBox="0 0 6.8 3.8"><path d="M0 0H6.8L3.4 3.8Z" fill="#c4c4c4"/></svg>
<div class="a" style="left:451.4px;top:39.6px;width:17px;height:15.6px;background:#414141;border-radius:2.5px"></div>
<svg class="a" style="left:451.4px;top:39.6px" width="17" height="16" viewBox="0 0 17 16"><path d="M3.8 14.6V7.6A4.9 4.9 0 0 1 13.6 7.6V14.6" stroke="#a9a9a9" stroke-width="3.2" fill="none"/><path d="M2.2 12.9H5.4M12 12.9H15.2" stroke="#3a3a3a" stroke-width="0.8"/></svg>
<div class="a" style="left:471.7px;top:39.6px;width:66.6px;height:15.6px;background:#191919;border-radius:3px"></div>
<div class="a" style="left:473.2px;top:41.300000000000004px;width:52.8px;height:12.2px;background:#474747;border-radius:3px"></div>
<div class="t" style="left:473.20px;top:41px;width:52.8px;text-align:center">Shaded</div>
<svg class="a" style="left:528.75px;top:46.0px" width="6.8" height="3.8" viewBox="0 0 6.8 3.8"><path d="M0 0H6.8L3.4 3.8Z" fill="#c4c4c4"/></svg>
<div class="a" style="left:201px;top:58.6px;width:338.5px;height:17.4px;background:#1e1e1e"></div>
<div class="a" style="left:288.7px;top:59.2px;width:89.8px;height:16.8px;background:#555555"></div>
<div class="t" style="left:204.70px;top:61px">data/menu.ui*</div>
<div class="t" style="left:291.40px;top:61px">data/scene.rgs</div>
<svg class="a" style="left:278.6px;top:64.5px" width="6" height="6" viewBox="0 0 6 6"><path d="M0.4 0.4L5.6 5.6M5.6 0.4L0.4 5.6" stroke="#e0e0e0" stroke-width="1.3" fill="none"/></svg>
<svg class="a" style="left:368.3px;top:64.5px" width="6" height="6" viewBox="0 0 6 6"><path d="M0.4 0.4L5.6 5.6M5.6 0.4L0.4 5.6" stroke="#e0e0e0" stroke-width="1.3" fill="none"/></svg>
<div class="a" style="left:539.5px;top:36.3px;width:5.2px;height:306px;background:#222222"></div>
<div class="a" style="left:544.5px;top:20px;width:254.5px;height:322.3px;background:#323232"></div>
<div class="a" style="left:544.5px;top:20px;width:254.5px;height:16.3px;background:#1e1e1e;border-radius:3px"></div>
<div class="t" style="left:547.00px;top:22px">Inspector</div>
<svg class="a" style="left:786.2px;top:24.1px" width="9.6" height="8.8" viewBox="0 0 9.6 8.8"><path d="M0.3 0.3L9.3 8.5M9.3 0.3L0.3 8.5" stroke="#b4b4b4" stroke-width="1.1" fill="none"/></svg>
<svg class="a" style="left:768.3000000000001px;top:24.1px" width="9.4" height="8.7" viewBox="0 0 9.4 8.7"><rect x="0.55" y="0.55" width="8.3" height="7.6" stroke="#b4b4b4" stroke-width="1.1" fill="none"/></svg>
<svg class="a" style="left:750.4000000000001px;top:24.1px" width="9.8" height="8.7" viewBox="0 0 9.8 8.7"><path d="M0 8.9H9.8" stroke="#b4b4b4" stroke-width="1.7" fill="none"/></svg>
<div class="t" style="left:547.00px;top:39px">Type Name: fyrox_texture::TextureImportOptions</div>
<div class="a" style="left:782.8px;top:38.4px;width:15px;height:13.5px;background:#404040;border-radius:2.5px;border:1px solid #555"></div>
<svg class="a" style="left:782.8px;top:38.4px" width="15" height="13.5" viewBox="0 0 15 13.5"><path d="M2.6 1.6H8.2L10.6 4V11.6H2.6Z" fill="#7f7f7f"/><path d="M4 4.6H7.6M4 6.8H7M4 9H7" stroke="#5c5c5c" stroke-width="1"/><circle cx="9.8" cy="7.6" r="2.2" fill="#6a6a6a" stroke="#b8b8b8" stroke-width="0.9"/><path d="M11.4 9.4L13.6 11.8" stroke="#b8b8b8" stroke-width="1.1"/></svg>
<div class="a" style="left:544.5px;top:53px;width:255.5px;height:43.5px;overflow:hidden">
<svg class="a" style="left:1.4px;top:5.800000000000001px" width="6.4" height="6" viewBox="0 0 6.4 6"><path d="M0 0H6.4L3.2 5.8Z" fill="#8e8e8e"/></svg>
<div class="t" style="left:8.50px;top:2px">Minification Filter</div>
<div class="a" style="left:112px;top:1.8000000000000003px;width:132px;height:14px;background:#1d1d1d;border-radius:3px"></div>
<div class="a" style="left:113.5px;top:2.7px;width:120px;height:11.9px;background:#404040;border-radius:3px"></div>
<div class="t" style="left:113.50px;top:2px;width:120px;text-align:center">LinearMipMapLinear</div>
<svg class="a" style="left:236.4px;top:7.2px" width="7" height="3.6" viewBox="0 0 7 3.6"><path d="M0 0H7L3.5 3.6Z" fill="#ababab"/></svg>
<svg class="a" style="left:1.4px;top:22.900000000000002px" width="6.4" height="6" viewBox="0 0 6.4 6"><path d="M0 0H6.4L3.2 5.8Z" fill="#8e8e8e"/></svg>
<div class="t" style="left:8.50px;top:19px">Magnification Filter</div>
<div class="a" style="left:112px;top:18.900000000000002px;width:132px;height:14px;background:#1d1d1d;border-radius:3px"></div>
<div class="a" style="left:113.5px;top:19.8px;width:120px;height:11.9px;background:#404040;border-radius:3px"></div>
<div class="t" style="left:113.50px;top:19px;width:120px;text-align:center">Linear</div>
<svg class="a" style="left:236.4px;top:24.3px" width="7" height="3.6" viewBox="0 0 7 3.6"><path d="M0 0H7L3.5 3.6Z" fill="#ababab"/></svg>
<svg class="a" style="left:1.4px;top:40.00000000000001px" width="6.4" height="6" viewBox="0 0 6.4 6"><path d="M0 0H6.4L3.2 5.8Z" fill="#8e8e8e"/></svg>
<div class="t" style="left:8.50px;top:36px">S Wrap Mode</div>
<div class="a" style="left:112px;top:36.00000000000001px;width:132px;height:14px;background:#1d1d1d;border-radius:3px"></div>
<div class="a" style="left:113.5px;top:36.900000000000006px;width:120px;height:11.9px;background:#404040;border-radius:3px"></div>
<div class="t" style="left:113.50px;top:36px;width:120px;text-align:center">Repeat</div>
<svg class="a" style="left:236.4px;top:41.400000000000006px" width="7" height="3.6" viewBox="0 0 7 3.6"><path d="M0 0H7L3.5 3.6Z" fill="#ababab"/></svg>
</div>
<div class="a" style="left:789.2px;top:53px;width:9.6px;height:43.5px;background:#2a2a2a"></div>
<div class="a" style="left:789.8px;top:55.3px;width:8.2px;height:8.1px;background:#474747;border-radius:2px"></div>
<svg class="a" style="left:790.9px;top:56.7px" width="6" height="5.4" viewBox="0 0 6 5.4"><path d="M3.0 0L6 5.4H0Z" fill="#8a8a8a"/></svg>
<div class="a" style="left:789.8px;top:65px;width:8.2px;height:9.8px;background:#474747;border-radius:4.1px"></div>
<div class="a" style="left:789.8px;top:86.9px;width:8.2px;height:7.8px;background:#474747;border-radius:2px"></div>
<svg class="a" style="left:790.9px;top:88.3px" width="6" height="5.4" viewBox="0 0 6 5.4"><path d="M0 0H6L3.0 5.4Z" fill="#8a8a8a"/></svg>
<div class="a" style="left:546px;top:99px;width:73.6px;height:12.2px;background:#404040;border-radius:3px"></div>
<div class="t" style="left:546.00px;top:98px;width:73.6px;text-align:center">Apply</div>
<div class="a" style="left:622.8px;top:99px;width:73.4px;height:12.2px;background:#404040;border-radius:3px"></div>
<div class="t" style="left:622.80px;top:98px;width:73.4px;text-align:center">Revert</div>
<svg class="a" style="left:546px;top:114.5px;overflow:hidden" width="252.5" height="228" viewBox="546 114.5 252.5 228"><defs><linearGradient id="psky" x1="0" y1="0" x2="0" y2="1"><stop offset="0" stop-color="#4a90d2"/><stop offset="0.205" stop-color="#72abde"/><stop offset="0.36" stop-color="#b5d5ef"/><stop offset="0.427" stop-color="#e6f0f8"/><stop offset="0.44" stop-color="#f1f6fa"/><stop offset="0.489" stop-color="#d4e4f1"/><stop offset="0.737" stop-color="#b4d3eb"/><stop offset="1" stop-color="#9bc5e4"/></linearGradient><clipPath id="tc"><path d="M589.6 143.6L759.6 140.8L751.2 304.4L597.4 301.6C599 296 595 290 597 284C599.5 277 594.5 270 596.5 262C598.5 255 593.5 248 595.5 240C597.5 232 592.5 226 594 218C595.5 210 591 204 592.5 196C594 190 590.5 186 591 180Z"/></clipPath></defs><rect x="546" y="114.5" width="252.5" height="225.4" fill="url(#psky)"/><rect x="546" y="339.8" width="252.5" height="3" fill="#1f1f1f"/><rect x="546" y="213.1" width="252.5" height="4.5" fill="#060606"/><rect x="546" y="217.8" width="252.5" height="1.5" fill="#ffffff"/><path d="M546 221.2L590 219.6V220.6L546 222.2ZM757 219.6L798.5 221.2V222.2L757 220.6Z" fill="#2a2a2a"/><rect x="546" y="222.6" width="252.5" height="1.2" fill="#ffffff" opacity="0.85"/><rect x="546" y="212.2" width="252.5" height="0.9" fill="#ffffff" opacity="0.8"/><g clip-path="url(#tc)"><rect x="585" y="138" width="180" height="170" fill="#d2956a"/><path d="M628.5 306 L628.5 301 C622 292 618 284 619.3 274.8 C620 266 624 262 623.2 256.5 C622 247 615 240 616.7 230.3 C618 221 623 215 629.8 212 C636 208.5 642 206 648 206.7 C656 207.5 662 214 669 213.2 C676 212 680 206 684.8 202.8 C690 199 694 196 698 196.2 C703 196.5 706 201 711 204 C716 207 721 209.5 726.7 209.3 C733 209 737 208 742.5 206.7 C748 205 751 203 757 201 V306 Z" fill="#bf8152"/><path d="M656 306 L656 301 C660 294 660 287 658.6 280 C657 272 650 268 650.7 261.7 C651.5 256 658 253 661.2 248.6 C664 243 662 237 663.9 232.9 C666 229 669 228.5 671.7 229 C678 230 684 234.5 690 234.2 C696 234 700 231.5 705.8 232.9 C712 234.5 716 241 721.5 243.4 C727 245.5 732 247 737.2 246 C744 244.5 749 242 756 240 V306 Z" fill="#a8683c"/><circle cx="694.5" cy="264.3" r="5.4" fill="#91562f"/><circle cx="736.4" cy="272.7" r="4.4" fill="#91562f"/><circle cx="729.4" cy="293" r="5.4" fill="#91562f"/><circle cx="678" cy="264" r="3.3" fill="#91562f"/><circle cx="691.4" cy="286.6" r="3.1" fill="#91562f"/><circle cx="668" cy="285" r="2.6" fill="#bf8152"/><circle cx="724" cy="257" r="3" fill="#bf8152"/><circle cx="653.4" cy="239.4" r="5.4" fill="#ac6f44"/><circle cx="650.8" cy="217" r="4.4" fill="#d2956a"/><circle cx="705.8" cy="240.8" r="4.4" fill="#c98a5c"/><circle cx="739.9" cy="235.5" r="4.4" fill="#ac6f44"/><circle cx="637" cy="257" r="3.4" fill="#ac6f44"/><circle cx="626" cy="227" r="2.6" fill="#d2956a"/><circle cx="660" cy="224" r="2.4" fill="#ac6f44"/><circle cx="719" cy="230" r="3.6" fill="#ac6f44"/><circle cx="700" cy="225" r="3.8" fill="#ac6f44"/><circle cx="745" cy="252" r="3.6" fill="#c98a5c"/><circle cx="633" cy="283" r="3.4" fill="#d2956a"/><circle cx="647" cy="278" r="3.6" fill="#ac6f44"/><circle cx="645" cy="297" r="3" fill="#ac6f44"/><circle cx="632" cy="247" r="2" fill="#d2956a"/><circle cx="624.5" cy="203.5" r="4.3" fill="#c08258"/><circle cx="671.7" cy="202.8" r="4" fill="#c08258"/><circle cx="609.6" cy="262.2" r="3.8" fill="#c08258"/><circle cx="611" cy="247" r="2.8" fill="#c08258"/><circle cx="610" cy="218" r="1.6" fill="#c08258"/><circle cx="697" cy="204" r="2.2" fill="#e0a981"/><circle cx="733" cy="202" r="2.4" fill="#c08258"/><circle cx="716" cy="196" r="1.8" fill="#c08258"/><circle cx="748" cy="212" r="2.2" fill="#d2956a"/><circle cx="751" cy="196" r="2.3" fill="#c08258"/><circle cx="620" cy="289" r="2.2" fill="#c08258"/><circle cx="723" cy="218" r="2" fill="#d2956a"/></g><path d="M590 143.5L759.6 140.8L757.7 180.5 C756.7 187.7 742.1 188.0 741.1 180.8 C740.1 188.0 725.5 188.3 724.5 181.1 C723.5 188.3 708.8 188.6 707.8 181.4 C706.8 188.6 692.2 188.9 691.2 181.7 C690.2 188.9 675.6 189.2 674.6 182.0 C673.6 189.2 659.0 189.5 658.0 182.3 C657.0 189.5 642.4 189.8 641.4 182.6 C640.4 189.8 625.7 190.1 624.7 182.9 C623.7 190.1 609.1 190.4 608.1 183.2 C607.1 190.4 592.5 190.7 591.5 183.5Z" fill="#9bcb3a"/><path d="M590 150Q590 143.8 596 143.5L759.6 140.8L758 172.3 C757.0 180.5 742.3 180.8 741.3 172.6 C740.3 180.8 725.6 181.1 724.6 172.9 C723.6 181.1 708.9 181.4 707.9 173.2 C706.9 181.4 692.2 181.7 691.2 173.5 C690.2 181.7 675.5 182.0 674.5 173.8 C673.5 182.0 658.8 182.3 657.8 174.1 C656.8 182.3 642.1 182.6 641.1 174.4 C640.1 182.6 625.4 182.9 624.4 174.7 C623.4 182.9 608.7 183.2 607.7 175.0 C606.7 183.2 592.0 183.5 591.0 175.3Z" fill="#dce84a"/><path d="M590 152Q590 143.8 596 143.5L759.6 140.8L759.1 151L594.5 154.6Q590.6 155 590 160Z" fill="#e6ee88"/><path d="M591.8 186V296" stroke="#e8eef2" stroke-width="0.6" stroke-dasharray="5 3" opacity="0.7"/><path d="M588.6 146V182" stroke="#ffffff" stroke-width="0.6" stroke-dasharray="5 3" opacity="0.5"/><path d="M671.6 114.5V227.2" stroke="#34c43c" stroke-width="0.9" opacity="0.85"/><path d="M671.6 227.2H798.5" stroke="#e23a20" stroke-width="1"/><path d="M671.6 227.2L633.2 340.5" stroke="#4a78e0" stroke-width="1"/><rect x="780.2" y="117.4" width="15.4" height="15" rx="2.5" fill="#3b4754" stroke="#a8c3e4" stroke-width="1.2"/><path d="M783 123V120.4H786M790 120.4H793V123M793 126.8V129.4H790M786 129.4H783V126.8" stroke="#f0f4f8" stroke-width="1.4" fill="none"/></svg>
<div class="a" style="left:2.2px;top:344.5px;width:523.8px;height:187px;background:#323232"></div>
<div class="a" style="left:2.2px;top:344.5px;width:523.8px;height:16.6px;background:#1e1e1e;border-radius:3px"></div>
<div class="t" style="left:3.40px;top:347px">Asset Browser</div>
<svg class="a" style="left:494.2px;top:348.6px" width="9.4" height="8.7" viewBox="0 0 9.4 8.7"><rect x="0.55" y="0.55" width="8.3" height="7.6" stroke="#b4b4b4" stroke-width="1.1" fill="none"/></svg>
<svg class="a" style="left:511.9px;top:348.6px" width="9.6" height="8.8" viewBox="0 0 9.6 8.8"><path d="M0.3 0.3L9.3 8.5M9.3 0.3L0.3 8.5" stroke="#b4b4b4" stroke-width="1.1" fill="none"/></svg>
<div class="a" style="left:2.2px;top:361px;width:523.8px;height:2px;background:#2a2a2a"></div>
<div class="a" style="left:3px;top:362.6px;width:125.6px;height:16.4px;background:#1e1e1e;border-radius:3px"></div>
<div class="t" style="left:4.00px;top:366px">Folders</div>
<div class="a" style="left:133.4px;top:362.6px;width:392px;height:16.4px;background:#1e1e1e;border-radius:3px"></div>
<div class="t" style="left:137.00px;top:366px">Folder Content - .\data\tiles</div>
<svg class="a" style="left:3px;top:386.4px" width="6" height="5.8" viewBox="0 0 6 5.8"><path d="M0 0H6L3.0 5.8Z" fill="#8a8a8a"/></svg>
<svg class="a" style="left:13px;top:384.7px" width="12" height="9" viewBox="0 0 12 9"><path d="M0 1.2Q0 0.3 0.9 0.3H4.6L5.8 1.5H11.1Q12 1.5 12 2.4V7.9Q12 8.8 11.1 8.8H0.9Q0 8.8 0 7.9Z" fill="#fbd24c"/><path d="M5.8 1.5H11.1Q12 1.5 12 2.4H5Z" fill="#f7a928"/></svg>
<div class="t" style="left:29.00px;top:383px">Assets</div>
<svg class="a" style="left:14px;top:404.4px" width="6" height="5.8" viewBox="0 0 6 5.8"><path d="M0 0H6L3.0 5.8Z" fill="#8a8a8a"/></svg>
<svg class="a" style="left:24px;top:402.7px" width="12" height="9" viewBox="0 0 12 9"><path d="M0 1.2Q0 0.3 0.9 0.3H4.6L5.8 1.5H11.1Q12 1.5 12 2.4V7.9Q12 8.8 11.1 8.8H0.9Q0 8.8 0 7.9Z" fill="#fbd24c"/><path d="M5.8 1.5H11.1Q12 1.5 12 2.4H5Z" fill="#f7a928"/></svg>
<div class="t" style="left:40.00px;top:401px">data</div>
<svg class="a" style="left:25.3px;top:422px" width="5.6" height="6" viewBox="0 0 5.6 6"><path d="M0 0L5.6 3.0L0 6Z" fill="#8a8a8a"/></svg>
<svg class="a" style="left:35px;top:420.7px" width="12" height="9" viewBox="0 0 12 9"><path d="M0 1.2Q0 0.3 0.9 0.3H4.6L5.8 1.5H11.1Q12 1.5 12 2.4V7.9Q12 8.8 11.1 8.8H0.9Q0 8.8 0 7.9Z" fill="#fbd24c"/><path d="M5.8 1.5H11.1Q12 1.5 12 2.4H5Z" fill="#f7a928"/></svg>
<div class="t" style="left:51.00px;top:419px">background</div>
<svg class="a" style="left:25.3px;top:440px" width="5.6" height="6" viewBox="0 0 5.6 6"><path d="M0 0L5.6 3.0L0 6Z" fill="#8a8a8a"/></svg>
<svg class="a" style="left:35px;top:438.7px" width="12" height="9" viewBox="0 0 12 9"><path d="M0 1.2Q0 0.3 0.9 0.3H4.6L5.8 1.5H11.1Q12 1.5 12 2.4V7.9Q12 8.8 11.1 8.8H0.9Q0 8.8 0 7.9Z" fill="#fbd24c"/><path d="M5.8 1.5H11.1Q12 1.5 12 2.4H5Z" fill="#f7a928"/></svg>
<div class="t" style="left:51.00px;top:437px">characters</div>
<svg class="a" style="left:25.3px;top:458px" width="5.6" height="6" viewBox="0 0 5.6 6"><path d="M0 0L5.6 3.0L0 6Z" fill="#8a8a8a"/></svg>
<svg class="a" style="left:35px;top:456.7px" width="12" height="9" viewBox="0 0 12 9"><path d="M0 1.2Q0 0.3 0.9 0.3H4.6L5.8 1.5H11.1Q12 1.5 12 2.4V7.9Q12 8.8 11.1 8.8H0.9Q0 8.8 0 7.9Z" fill="#fbd24c"/><path d="M5.8 1.5H11.1Q12 1.5 12 2.4H5Z" fill="#f7a928"/></svg>
<div class="t" style="left:51.00px;top:455px">objects</div>
<div class="a" style="left:22.5px;top:470.3px;width:106px;height:17.6px;background:#3d5a8f"></div>
<svg class="a" style="left:25px;top:476.4px" width="6" height="5.8" viewBox="0 0 6 5.8"><path d="M0 0H6L3.0 5.8Z" fill="#8a8a8a"/></svg>
<svg class="a" style="left:35px;top:474.7px" width="12" height="9" viewBox="0 0 12 9"><path d="M0 1.2Q0 0.3 0.9 0.3H4.6L5.8 1.5H11.1Q12 1.5 12 2.4V7.9Q12 8.8 11.1 8.8H0.9Q0 8.8 0 7.9Z" fill="#fbd24c"/><path d="M5.8 1.5H11.1Q12 1.5 12 2.4H5Z" fill="#f7a928"/></svg>
<div class="t" style="left:51.00px;top:473px">tiles</div>
<svg class="a" style="left:46px;top:492.7px" width="12" height="9" viewBox="0 0 12 9"><path d="M0 1.2Q0 0.3 0.9 0.3H4.6L5.8 1.5H11.1Q12 1.5 12 2.4V7.9Q12 8.8 11.1 8.8H0.9Q0 8.8 0 7.9Z" fill="#fbd24c"/><path d="M5.8 1.5H11.1Q12 1.5 12 2.4H5Z" fill="#f7a928"/></svg>
<div class="t" style="left:62.00px;top:491px">water</div>
<div class="a" style="left:134.5px;top:382px;width:16.5px;height:16px;background:#1d7a3c;border-radius:2.5px"></div>
<div class="t" style="left:134.50px;top:385px;font-size:10px;color:#f0f0f0;width:16.5px;text-align:center">+</div>
<div class="a" style="left:154px;top:382px;width:16.2px;height:16px;background:#444444;border-radius:2.5px"></div>
<svg class="a" style="left:154px;top:382px" width="16.2" height="16" viewBox="0 0 16.2 16"><path d="M3 10.6A5.6 5.6 0 0 1 11.2 3.1M13.4 5.6A5.6 5.6 0 0 1 5.2 13" stroke="#c8c8c8" stroke-width="1.2" fill="none"/><path d="M13.6 2L12.9 6L9.6 4.2ZM2.8 14.2L3.5 10.2L6.8 12Z" fill="#c8c8c8"/></svg>
<div class="a" style="left:173.5px;top:383px;width:350px;height:14.5px;background:#1b1b1b;border-radius:3px"></div>
<svg class="a" style="left:176.3px;top:385.9px" width="9" height="9" viewBox="0 0 9 9"><circle cx="2.9" cy="2.9" r="2.5" fill="none" stroke="#bdbdbd" stroke-width="1.1"/><path d="M4.8 4.8L8.6 8.4" stroke="#bdbdbd" stroke-width="1.3"/></svg>
<svg class="a" style="left:513.5px;top:386.9px" width="6.4" height="6.4" viewBox="0 0 6.4 6.4"><path d="M0.5 0.5L5.9 5.9M5.9 0.5L0.5 5.9" stroke="#f0f0f0" stroke-width="1.4" fill="none"/></svg>
<svg class="a" style="left:133px;top:400px;overflow:hidden" width="385" height="134" viewBox="133 400 385 134"><path d="M134.6 409.85Q134.6 406.65 137.8 406.65H149.8L153.6 409.55H176.8Q180.0 409.55 180.0 412.75V439.15Q180.0 442.35 176.8 442.35H137.8Q134.6 442.35 134.6 439.15Z" fill="#fbd34d"/><path d="M153.6 409.55H176.8Q180.0 409.55 180.0 412.75V414.15H159.6Z" fill="#f9ab2b"/><path d="M147.1 420.35H164.6Q169.2 420.35 169.2 424.75V432.35Q169.2 436.75 164.6 436.75H151.1" stroke="#000" stroke-width="4.4" fill="none" stroke-linecap="round" stroke-linejoin="round"/><path d="M142.6 420.35L153.6 412.75V427.95Z" fill="#000" stroke="#000" stroke-width="1.5" stroke-linejoin="round"/><path d="M184.1 409.85Q184.1 406.65 187.2 406.65H199.2L203.1 409.55H226.2Q229.5 409.55 229.5 412.75V439.15Q229.5 442.35 226.2 442.35H187.2Q184.1 442.35 184.1 439.15Z" fill="#fbd34d"/><path d="M203.1 409.55H226.2Q229.5 409.55 229.5 412.75V414.15H209.1Z" fill="#f9ab2b"/><path d="M198.6 418.95Q205.1 413.35 212.6 418.95Z" fill="#b6d44c"/><rect x="233.5" y="401.75" width="45.4" height="45" fill="#7b4a24"/><path d="M 259.0 401.8 C 257.5 406.8 261.5 409.8 261.0 414.8 C 260.5 419.8 264.5 421.8 265.0 425.8 C 265.5 429.8 269.5 430.8 272.5 432.2 C 275.5 433.8 277.5 433.8 278.9 433.8 V 401.8 Z" fill="#90593a"/><path d="M 262.0 401.8 C 261.0 406.8 264.5 409.8 264.0 414.8 C 263.5 419.8 267.5 420.8 268.5 424.8 C 269.5 428.8 273.5 429.8 278.9 430.8 V 401.8 Z" fill="#a4673f"/><circle cx="242.5" cy="416.8" r="1.6" fill="#6a3e1d"/><circle cx="240.5" cy="434.8" r="2.3" fill="#6a3e1d"/><circle cx="252.5" cy="438.2" r="2" fill="#6a3e1d"/><circle cx="273.0" cy="442.8" r="2.3" fill="#6a3e1d"/><circle cx="259.5" cy="422.8" r="1.2" fill="#6a3e1d"/><rect x="283.0" y="403.75" width="45.4" height="43" fill="#7b4a24"/><path d="M283.0 429.8 q 3.8 -3.5 7.6 0 t 7.6 0 q 3.8 3.5 7.6 0 t 7.6 0 q 3.8 -3.5 7.6 0 t 7.6 0 V404.75 H283.0 Z" fill="#90593a"/><path d="M283.0 419.2 q 3.8 3.5 7.6 0 t 7.6 0 q 3.8 -3.5 7.6 0 t 7.6 0 q 3.8 3.5 7.6 0 t 7.6 0 V404.75 H283.0 Z" fill="#a4673f"/><path d="M283.0 407.2 H328.4 V410.8 Q 325.5 413.9 322.7 410.6 Q 319.8 413.9 317.0 410.6 Q 314.2 413.9 311.3 410.6 Q 308.5 413.9 305.7 410.6 Q 302.8 413.9 300.0 410.6 Q 297.1 413.9 294.3 410.6 Q 291.5 413.9 288.6 410.6 Q 285.8 413.9 283.0 410.6 Z" fill="#6fa82e"/><path d="M283.0 401.8 Q283.0 401.8 283.0 401.8 H328.4 Q328.4 401.8 328.4 401.8 V406.6 Q 325.5 409.2 322.7 406.6 Q 319.8 409.2 317.0 406.6 Q 314.2 409.2 311.3 406.6 Q 308.5 409.2 305.7 406.6 Q 302.8 409.2 300.0 406.6 Q 297.1 409.2 294.3 406.6 Q 291.5 409.2 288.6 406.6 Q 285.8 409.2 283.0 406.6 Z" fill="#a9d53a"/><path d="M283.0 401.8 Q283.0 401.8 283.0 401.8 H328.4 Q328.4 401.8 328.4 401.8 V404.4 H283.0 Z" fill="#c3e35a" opacity="0.75"/><path d="M 333.9 401.8 H 377.8 V 442.8 Q 374.4 446.8 370.4 445.2 T 362.4 445.2 T 354.4 445.8 T 346.4 444.8 T 338.4 445.8 Q 335.9 443.8 336.9 439.8 C 340.4 431.8 333.4 427.8 335.9 417.8 C 337.4 410.8 332.9 406.8 333.9 401.8 Z" fill="#7b4a24"/><path d="M 336.9 439.8 Q 342.4 435.8 348.4 438.8 T 360.4 438.8 T 372.4 439.2 L 377.8 437.8 V 442.8 Q 374.4 446.8 370.4 445.2 T 362.4 445.2 T 354.4 445.8 T 346.4 444.8 T 338.4 445.8 Q 335.9 443.8 336.9 439.8 Z" fill="#6a3d1c"/><path d="M 333.9 401.8 H 343.4 C 342.4 409.8 348.4 415.8 347.9 422.8 C 347.4 429.8 343.4 433.8 340.4 438.8 L 336.9 439.8 C 340.4 431.8 333.4 427.8 335.9 417.8 C 337.4 410.8 332.9 406.8 333.9 401.8 Z" fill="#a4673f"/><circle cx="370.4" cy="415.8" r="2.5" fill="#6a3e1d"/><circle cx="354.4" cy="425.8" r="1.8" fill="#6a3e1d"/><circle cx="372.4" cy="405.8" r="1.6" fill="#6a3e1d"/><circle cx="375.4" cy="431.8" r="1.2" fill="#6a3e1d"/><path d="M 382.4 415.8 H 427.2 V 446.8 H 423.9 C 415.9 445.8 408.9 441.8 405.9 434.8 C 402.9 428.8 396.9 429.8 391.9 425.8 C 385.9 421.8 383.4 419.8 382.4 415.8 Z" fill="#7b4a24"/><path d="M 382.4 415.8 H 427.2 V 435.8 Q 421.9 432.8 416.9 435.8 T 407.9 434.8 C 402.9 428.8 396.9 429.8 391.9 425.8 C 385.9 421.8 383.4 419.8 382.4 415.8 Z" fill="#90593a"/><path d="M 382.4 415.8 H 427.2 V 426.8 Q 421.9 422.8 415.9 426.8 T 403.9 426.8 T 391.9 425.8 C 385.9 421.8 383.4 419.8 382.4 415.8 Z" fill="#a4673f"/><path d="M381.9 412.2 H427.2 V416.2 Q 424.4 419.4 421.6 416.1 Q 418.7 419.4 415.9 416.1 Q 413.1 419.4 410.2 416.1 Q 407.4 419.4 404.6 416.1 Q 401.7 419.4 398.9 416.1 Q 396.0 419.4 393.2 416.1 Q 390.4 419.4 387.5 416.1 Q 384.7 419.4 381.9 416.1 Z" fill="#6fa82e"/><path d="M381.9 405.8 Q381.9 401.8 385.9 401.8 H427.2 Q427.2 401.8 427.2 401.8 V411.6 Q 424.4 414.2 421.6 411.6 Q 418.7 414.2 415.9 411.6 Q 413.1 414.2 410.2 411.6 Q 407.4 414.2 404.6 411.6 Q 401.7 414.2 398.9 411.6 Q 396.0 414.2 393.2 411.6 Q 390.4 414.2 387.5 411.6 Q 384.7 414.2 381.9 411.6 Z" fill="#a9d53a"/><path d="M381.9 405.8 Q381.9 401.8 385.9 401.8 H427.2 Q427.2 401.8 427.2 401.8 V408.4 H381.9 Z" fill="#c3e35a" opacity="0.75"/><path d="M 431.3 415.8 H 476.7 V 442.8 Q 473.3 446.8 469.3 445.2 T 461.3 445.2 T 453.3 445.8 T 445.3 444.8 T 437.3 445.8 L 431.3 443.8 Z" fill="#7b4a24"/><path d="M 431.3 415.8 H 476.7 V 437.8 Q 471.3 433.8 465.3 437.8 T 453.3 437.8 T 441.3 437.8 L 431.3 436.8 Z" fill="#90593a"/><path d="M 431.3 415.8 H 476.7 V 426.8 Q 471.3 422.8 465.3 426.8 T 453.3 426.8 T 441.3 426.8 L 431.3 425.8 Z" fill="#a4673f"/><path d="M 431.3 439.8 Q 437.3 436.8 443.3 439.8 T 455.3 439.8 T 467.3 439.8 L 476.7 438.8 V 442.8 Q 473.3 446.8 469.3 445.2 T 461.3 445.2 T 453.3 445.8 T 445.3 444.8 T 437.3 445.8 L 431.3 443.8 Z" fill="#6a3d1c"/><path d="M431.3 412.2 H476.7 V416.2 Q 473.9 419.4 471.0 416.1 Q 468.2 419.4 465.4 416.1 Q 462.5 419.4 459.7 416.1 Q 456.8 419.4 454.0 416.1 Q 451.2 419.4 448.3 416.1 Q 445.5 419.4 442.7 416.1 Q 439.8 419.4 437.0 416.1 Q 434.1 419.4 431.3 416.1 Z" fill="#6fa82e"/><path d="M431.3 401.8 Q431.3 401.8 431.3 401.8 H476.7 Q476.7 401.8 476.7 401.8 V411.6 Q 473.9 414.2 471.0 411.6 Q 468.2 414.2 465.4 411.6 Q 462.5 414.2 459.7 411.6 Q 456.8 414.2 454.0 411.6 Q 451.2 414.2 448.3 411.6 Q 445.5 414.2 442.7 411.6 Q 439.8 414.2 437.0 411.6 Q 434.1 414.2 431.3 411.6 Z" fill="#a9d53a"/><path d="M431.3 401.8 Q431.3 401.8 431.3 401.8 H476.7 Q476.7 401.8 476.7 401.8 V404.4 H431.3 Z" fill="#c3e35a" opacity="0.75"/><path d="M 134.6 483.8 H 179.5 C 178.6 487.8 176.6 489.8 173.1 491.8 C 168.6 493.8 165.6 496.8 163.6 501.8 C 160.6 507.8 154.6 510.8 146.6 513.2 L 134.6 514.8 Z" fill="#7b4a24"/><path d="M 134.6 483.8 H 179.5 C 178.6 487.8 176.6 489.8 173.1 491.8 C 168.6 493.8 165.6 496.8 163.6 501.8 Q 158.6 499.8 152.6 502.8 T 140.6 502.8 L 134.6 503.8 Z" fill="#90593a"/><path d="M 134.6 483.8 H 179.5 C 178.6 487.8 176.6 489.8 173.1 491.8 C 168.6 493.8 164.6 495.8 160.6 494.8 Q 154.6 490.8 146.6 494.8 T 134.6 494.8 Z" fill="#a4673f"/><path d="M134.6 480.2 H180.0 V484.2 Q 177.2 487.4 174.3 484.1 Q 171.5 487.4 168.6 484.1 Q 165.8 487.4 163.0 484.1 Q 160.1 487.4 157.3 484.1 Q 154.5 487.4 151.6 484.1 Q 148.8 487.4 145.9 484.1 Q 143.1 487.4 140.3 484.1 Q 137.4 487.4 134.6 484.1 Z" fill="#6fa82e"/><path d="M134.6 469.8 Q134.6 469.8 134.6 469.8 H176.0 Q180.0 469.8 180.0 473.8 V479.6 Q 177.2 482.2 174.3 479.6 Q 171.5 482.2 168.6 479.6 Q 165.8 482.2 163.0 479.6 Q 160.1 482.2 157.3 479.6 Q 154.5 482.2 151.6 479.6 Q 148.8 482.2 145.9 479.6 Q 143.1 482.2 140.3 479.6 Q 137.4 482.2 134.6 479.6 Z" fill="#a9d53a"/><path d="M134.6 469.8 Q134.6 469.8 134.6 469.8 H176.0 Q180.0 469.8 180.0 473.8 V476.4 H134.6 Z" fill="#c3e35a" opacity="0.75"/><path d="M 184.1 469.8 H 228.1 C 229.6 474.8 225.1 478.8 227.1 484.8 C 229.6 492.8 224.1 497.8 226.6 505.8 C 227.1 508.8 226.1 511.8 224.1 513.2 Q 220.1 514.8 216.1 513.2 T 208.1 513.8 T 200.1 512.8 T 192.1 513.8 L 184.1 512.8 Z" fill="#7b4a24"/><path d="M 184.1 505.8 Q 190.1 503.2 196.1 505.8 T 208.1 506.2 T 220.1 505.8 L 226.6 505.8 C 227.1 508.8 226.1 511.8 224.1 513.2 Q 220.1 514.8 216.1 513.2 T 208.1 513.8 T 200.1 512.8 T 192.1 513.8 L 184.1 512.8 Z" fill="#6a3d1c"/><path d="M 219.1 469.8 H 228.1 C 229.6 474.8 225.1 478.8 227.1 484.8 C 229.6 492.8 224.1 497.8 226.6 505.8 L 222.1 505.8 C 219.1 500.8 222.1 493.8 219.6 487.8 C 217.1 480.8 221.1 475.8 219.1 469.8 Z" fill="#a4673f"/><circle cx="192.1" cy="483.8" r="2.4" fill="#6a3e1d"/><circle cx="208.1" cy="494.8" r="1.7" fill="#6a3e1d"/><circle cx="189.1" cy="497.8" r="1.3" fill="#6a3e1d"/><circle cx="215.1" cy="485.8" r="1.5" fill="#6a3e1d"/><path d="M 233.5 474.8 Q 238.5 477.8 244.5 477.1 C 250.5 476.8 255.5 470.2 264.5 469.8 C 270.5 469.8 273.5 474.2 278.9 473.4 V 514.8 H 233.5 Z" fill="#5fb7f3"/><path d="M 233.5 495.8 Q 241.5 500.8 251.5 495.8 T 269.5 494.8 L 278.9 493.8 V 514.8 H 233.5 Z" fill="#3d9ef1"/><path d="M 233.5 474.8 Q 238.5 477.8 244.5 477.1 C 250.5 476.8 255.5 470.2 264.5 469.8 C 270.5 469.8 273.5 474.2 278.9 473.4" stroke="#a6dafa" stroke-width="1.6" fill="none"/><path d="M 233.5 484.8 Q 241.5 479.2 250.5 483.8 T 266.5 484.8 T 278.9 478.8" stroke="#93d1f8" stroke-width="1.5" fill="none"/><path d="M 233.5 492.8 Q 242.5 498.8 252.5 493.2 T 269.5 487.8 L 278.9 490.2" stroke="#93d1f8" stroke-width="1.5" fill="none"/><rect x="283.0" y="469.75" width="45.4" height="45" fill="#3b9bf5"/><rect x="332.4" y="471.75" width="45.4" height="43" fill="#7b4a24"/><path d="M332.4 498.8 q 3.8 -3.5 7.6 0 t 7.6 0 q 3.8 3.5 7.6 0 t 7.6 0 q 3.8 -3.5 7.6 0 t 7.6 0 V472.75 H332.4 Z" fill="#90593a"/><path d="M332.4 489.8 q 3.8 3.5 7.6 0 t 7.6 0 q 3.8 -3.5 7.6 0 t 7.6 0 q 3.8 3.5 7.6 0 t 7.6 0 V472.75 H332.4 Z" fill="#a4673f"/><path d="M332.4 477.8 H377.8 V480.2 Q 375.0 483.4 372.1 480.1 Q 369.3 483.4 366.4 480.1 Q 363.6 483.4 360.8 480.1 Q 357.9 483.4 355.1 480.1 Q 352.3 483.4 349.4 480.1 Q 346.6 483.4 343.7 480.1 Q 340.9 483.4 338.1 480.1 Q 335.2 483.4 332.4 480.1 Z" fill="#6fa82e"/><path d="M332.4 469.8 Q332.4 469.8 332.4 469.8 H377.8 Q377.8 469.8 377.8 469.8 V477.1 Q 375.0 479.8 372.1 477.1 Q 369.3 479.8 366.4 477.1 Q 363.6 479.8 360.8 477.1 Q 357.9 479.8 355.1 477.1 Q 352.3 479.8 349.4 477.1 Q 346.6 479.8 343.7 477.1 Q 340.9 479.8 338.1 477.1 Q 335.2 479.8 332.4 477.1 Z" fill="#a9d53a"/><path d="M332.4 469.8 Q332.4 469.8 332.4 469.8 H377.8 Q377.8 469.8 377.8 469.8 V472.4 H332.4 Z" fill="#c3e35a" opacity="0.75"/><path d="M 381.9 472.8 H 427.2 V 483.8 C 425.4 489.8 427.9 495.8 426.4 501.8 C 425.4 507.8 427.2 510.8 426.2 514.8 H 381.9 Z" fill="#7b4a24"/><path d="M381.9 498.8 q 3.7 -3.5 7.4 0 t 7.4 0 q 3.7 3.5 7.4 0 t 7.4 0 q 3.7 -3.5 7.4 0 t 7.4 0 V472.75 H381.9 Z" fill="#90593a"/><path d="M381.9 489.8 q 3.7 3.5 7.5 0 t 7.5 0 q 3.7 -3.5 7.5 0 t 7.5 0 q 3.7 3.5 7.5 0 t 7.5 0 V472.75 H381.9 Z" fill="#a4673f"/><path d="M 418.9 489.8 C 416.9 496.8 420.9 502.8 417.9 508.8 L 416.9 514.8 H 426.2 C 427.2 510.8 425.4 507.8 426.4 501.8 C 427.9 495.8 425.4 489.8 426.9 483.8 Z" fill="#a4673f"/><path d="M381.9 477.8 H427.2 V480.2 Q 424.4 483.4 421.6 480.1 Q 418.7 483.4 415.9 480.1 Q 413.1 483.4 410.2 480.1 Q 407.4 483.4 404.6 480.1 Q 401.7 483.4 398.9 480.1 Q 396.0 483.4 393.2 480.1 Q 390.4 483.4 387.5 480.1 Q 384.7 483.4 381.9 480.1 Z" fill="#6fa82e"/><path d="M381.9 469.8 Q381.9 469.8 381.9 469.8 H423.2 Q427.2 469.8 427.2 473.8 V477.1 Q 424.4 479.8 421.6 477.1 Q 418.7 479.8 415.9 477.1 Q 413.1 479.8 410.2 477.1 Q 407.4 479.8 404.6 477.1 Q 401.7 479.8 398.9 477.1 Q 396.0 479.8 393.2 477.1 Q 390.4 479.8 387.5 477.1 Q 384.7 479.8 381.9 477.1 Z" fill="#a9d53a"/><path d="M381.9 469.8 Q381.9 469.8 381.9 469.8 H423.2 Q427.2 469.8 427.2 473.8 V476.4 H381.9 Z" fill="#c3e35a" opacity="0.75"/><path d="M 433.1 469.8 C 431.8 475.8 434.8 481.8 433.3 488.8 C 432.3 493.8 436.8 499.8 435.8 504.8 C 434.8 508.8 431.3 511.8 431.3 514.8 H 476.7 V 469.8 Z" fill="#7b4a24"/><path d="M 433.1 469.8 C 431.8 475.8 434.8 481.8 433.3 488.8 C 432.3 493.8 436.8 499.8 435.8 504.8 C 434.8 508.8 431.3 511.8 431.3 514.8 H 443.3 C 448.3 509.8 443.3 505.8 447.3 500.8 C 452.3 495.8 453.3 491.8 449.3 485.8 C 446.3 479.8 443.3 475.8 444.3 469.8 Z" fill="#90593a"/><path d="M 433.1 469.8 C 431.8 475.8 434.8 481.8 433.3 488.8 C 432.3 493.8 436.8 499.8 435.8 504.8 C 434.8 508.8 431.3 511.8 431.3 514.8 H 440.3 C 445.3 509.8 440.3 505.8 444.3 500.8 C 449.3 495.8 450.3 491.8 446.3 485.8 C 443.3 479.8 440.3 475.8 441.3 469.8 Z" fill="#a4673f"/><circle cx="467.3" cy="493.8" r="2.4" fill="#6a3e1d"/><circle cx="459.3" cy="477.8" r="1.5" fill="#6a3e1d"/><circle cx="471.3" cy="475.8" r="1.4" fill="#6a3e1d"/><circle cx="461.3" cy="507.8" r="1.6" fill="#6a3e1d"/><path d="M265.4 493.8V507.6L268.6 504.8L271 510.2L273.3 509.2L270.9 504L275.2 503.7Z" fill="#fff" stroke="#222" stroke-width="0.9" stroke-linejoin="round"/></svg>
<div class="t" style="left:134.40px;top:450px;width:45.6px;text-align:center">data</div>
<div class="t" style="left:183.85px;top:450px;width:45.6px;text-align:center">water</div>
<div class="t" style="left:233.30px;top:450px;width:45.6px;text-align:center">10.png</div>
<div class="t" style="left:282.75px;top:450px;width:45.6px;text-align:center">11.png</div>
<div class="t" style="left:332.20px;top:450px;width:45.6px;text-align:center">12.png</div>
<div class="t" style="left:381.65px;top:450px;width:45.6px;text-align:center">13.png</div>
<div class="t" style="left:431.10px;top:450px;width:45.6px;text-align:center">14.png</div>
<div class="t" style="left:134.40px;top:518px;width:45.6px;text-align:center">15.png</div>
<div class="t" style="left:183.85px;top:518px;width:45.6px;text-align:center">16.png</div>
<div class="t" style="left:233.30px;top:518px;width:45.6px;text-align:center">17.png</div>
<div class="t" style="left:282.75px;top:518px;width:45.6px;text-align:center">18.png</div>
<div class="t" style="left:332.20px;top:518px;width:45.6px;text-align:center">2.png</div>
<div class="t" style="left:381.65px;top:518px;width:45.6px;text-align:center">3.png</div>
<div class="t" style="left:431.10px;top:518px;width:45.6px;text-align:center">4.png</div>
<div class="a" style="left:513.8px;top:400px;width:11px;height:131.6px;background:#282828"></div>
<div class="a" style="left:514.4px;top:400.6px;width:9.6px;height:9.4px;background:#474747;border-radius:2px"></div>
<svg class="a" style="left:516px;top:402.5px" width="6.5" height="5.8" viewBox="0 0 6.5 5.8"><path d="M3.25 0L6.5 5.8H0Z" fill="#8a8a8a"/></svg>
<div class="a" style="left:514.4px;top:412px;width:9.6px;height:69px;background:#474747;border-radius:4.5px"></div>
<div class="a" style="left:514.4px;top:520.6px;width:9.6px;height:9.4px;background:#474747;border-radius:2px"></div>
<svg class="a" style="left:516px;top:523px" width="6.5" height="5.8" viewBox="0 0 6.5 5.8"><path d="M0 0H6.5L3.25 5.8Z" fill="#8a8a8a"/></svg>
<div class="a" style="left:530.5px;top:344.5px;width:269.5px;height:17.2px;background:#2a2a2a"></div>
<div class="a" style="left:617.3px;top:344.5px;width:61px;height:16.5px;background:#585858"></div>
<div class="t" style="left:533.80px;top:346px">Audio</div>
<div class="t" style="left:577.00px;top:346px">Log</div>
<div class="t" style="left:621.00px;top:346px">Commands</div>
<div class="a" style="left:530.5px;top:361.7px;width:268.5px;height:170px;background:#323232"></div>
<div class="a" style="left:530.5px;top:361.7px;width:268.5px;height:16.6px;background:#1e1e1e;border-radius:3px"></div>
<div class="t" style="left:534.50px;top:365px">Command Stack</div>
<svg class="a" style="left:750.4px;top:366.2px" width="9.8" height="8.7" viewBox="0 0 9.8 8.7"><path d="M0 8.9H9.8" stroke="#b4b4b4" stroke-width="1.7" fill="none"/></svg>
<svg class="a" style="left:768.4px;top:366.2px" width="9.4" height="8.7" viewBox="0 0 9.4 8.7"><rect x="0.55" y="0.55" width="8.3" height="7.6" stroke="#b4b4b4" stroke-width="1.1" fill="none"/></svg>
<svg class="a" style="left:786.2px;top:366.2px" width="9.6" height="8.8" viewBox="0 0 9.6 8.8"><path d="M0.3 0.3L9.3 8.5M9.3 0.3L0.3 8.5" stroke="#b4b4b4" stroke-width="1.1" fill="none"/></svg>
<div class="a" style="left:550.6px;top:380px;width:235.6px;height:151.6px;background:#282828"></div>
<div class="a" style="left:786.2px;top:380px;width:12.6px;height:151.6px;background:#2b2b2b"></div>
<div class="a" style="left:786.2px;top:380px;width:1.2px;height:151.6px;background:#383838"></div>
<div class="a" style="left:531.9px;top:380.6px;width:16px;height:17.1px;background:#3f3f3f;border-radius:2.5px"></div>
<div class="a" style="left:531.9px;top:401.5px;width:16px;height:17.1px;background:#3f3f3f;border-radius:2.5px"></div>
<div class="a" style="left:531.9px;top:422.1px;width:16px;height:17.1px;background:#3f3f3f;border-radius:2.5px"></div>
<svg class="a" style="left:531.9px;top:380.6px" width="16" height="17.1" viewBox="0 0 16 17.1"><path d="M15.6 1.6H10.6Q3.2 1.6 3.2 9.5V13" stroke="#c4c4c4" stroke-width="1.1" fill="none"/><path d="M0.9 7.4L3.2 15.4L5.5 7.4L3.2 9.6Z" fill="#c4c4c4"/></svg>
<svg class="a" style="left:531.9px;top:401.5px" width="16" height="17.1" viewBox="0 0 16 17.1"><path d="M0.4 2H5.4Q12.8 2 12.8 9.8V13" stroke="#c4c4c4" stroke-width="1.1" fill="none"/><path d="M10.5 7.6L12.8 15.6L15.1 7.6L12.8 9.8Z" fill="#c4c4c4"/></svg>
<svg class="a" style="left:531.9px;top:422.1px" width="16" height="17.1" viewBox="0 0 16 17.1"><path d="M3.4 6.4H12.8V14Q12.8 15.4 11.4 15.4H4.8Q3.4 15.4 3.4 14Z" fill="#c4c4c4"/><path d="M2 4.6H14.2" stroke="#c4c4c4" stroke-width="1.4"/><path d="M5.8 4V2.8H10.4V4" stroke="#c4c4c4" stroke-width="1.1" fill="none"/><path d="M6.4 8.4V13.4M9.8 8.4V13.4" stroke="#3f3f3f" stroke-width="1.5"/></svg>
<div class="t" style="left:553.40px;top:380px;letter-spacing:-0.12px">Change Selection</div>
<div class="t" style="left:553.40px;top:394px;letter-spacing:-0.12px">Change Selection</div>
<div class="t" style="left:553.40px;top:407px;letter-spacing:-0.12px">Change Selection</div>
<div class="t" style="left:553.40px;top:421px;letter-spacing:-0.12px">Change Selection</div>
<div class="t" style="left:553.40px;top:434px;letter-spacing:-0.12px">Change Selection</div>
<div class="t" style="left:553.40px;top:447px;letter-spacing:-0.12px">Change Selection</div>
<div class="t" style="left:553.40px;top:461px;letter-spacing:-0.12px">Change Selection</div>
<div class="t" style="left:553.40px;top:474px;letter-spacing:-0.12px">Change Selection</div>
<div class="t" style="left:553.40px;top:488px;letter-spacing:-0.12px">Change Selection</div>
<div class="t" style="left:553.40px;top:501px;letter-spacing:-0.12px">Change Selection</div>
<div class="t" style="left:553.40px;top:515px;letter-spacing:-0.12px">Change Selection</div>
<div class="t" style="left:553.40px;top:528px;letter-spacing:-0.12px">Change Selection</div>
<div class="a" style="left:788.7px;top:381.8px;width:9px;height:8.4px;background:#474747;border-radius:2px"></div>
<svg class="a" style="left:790px;top:383.3px" width="6.3" height="5.6" viewBox="0 0 6.3 5.6"><path d="M3.15 0L6.3 5.6H0Z" fill="#8a8a8a"/></svg>
<div class="a" style="left:788.7px;top:391.6px;width:9px;height:65.5px;background:#474747;border-radius:4.5px"></div>
<div class="a" style="left:788.7px;top:521.4px;width:9px;height:8.4px;background:#474747;border-radius:2px"></div>
<svg class="a" style="left:790px;top:523.3px" width="6.3" height="5.6" viewBox="0 0 6.3 5.6"><path d="M0 0H6.3L3.15 5.6Z" fill="#8a8a8a"/></svg>
<div class="a" style="left:0px;top:0px;width:800px;height:1.5px;background:#111111"></div>
<div class="a" style="left:0px;top:0px;width:2.2px;height:534px;background:#181818"></div>
<div class="a" style="left:798.8px;top:0px;width:1.2px;height:534px;background:#1c1c1c"></div>
<div class="a" style="left:0px;top:531.6px;width:800px;height:2.4px;background:#151515"></div>
</body></html>
